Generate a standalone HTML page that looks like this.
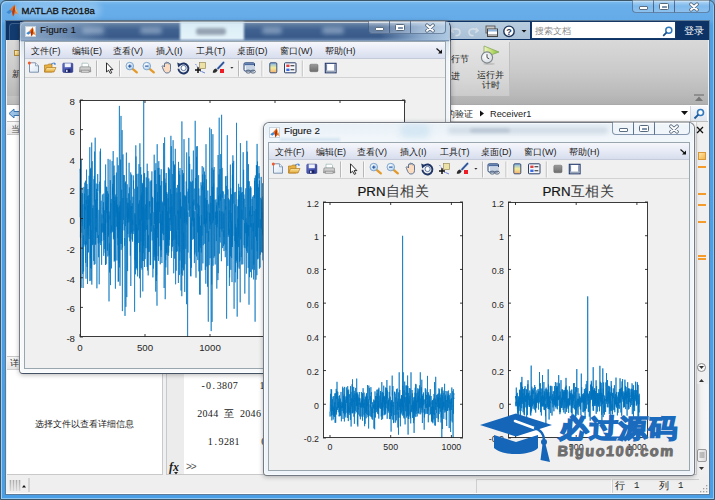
<!DOCTYPE html>
<html><head><meta charset="utf-8">
<style>
*{box-sizing:border-box}
html,body{margin:0;padding:0;width:715px;height:500px;overflow:hidden;background:#6aa6d8;font-family:"Liberation Sans",sans-serif;color:#1b1b1b}
.a{position:absolute}
#mainframe{left:0;top:0;width:715px;height:500px;border:1px solid #3a5668;border-radius:6px 6px 0 0;
 box-shadow:inset 1px 1px 0 #9ccdf4,inset -1px -1px 0 #8ec8f2;
 background:linear-gradient(180deg,#80bcee 0px,#6aafea 4px,#64abe9 19px,#4ea0e6 24px,#4a9ee6 100%)}
.t9{font-size:9px;white-space:nowrap;line-height:10px}
.cj{font-size:9px;white-space:nowrap;line-height:10px;font-weight:500}
.mono{font-family:"Liberation Mono",monospace;font-size:9px;white-space:pre;line-height:10px;color:#222}
.capbtn{border:1px solid rgba(40,70,110,.55);border-top:none;background:linear-gradient(180deg,rgba(255,255,255,.45),rgba(255,255,255,.15) 50%,rgba(255,255,255,.25));}
.menu span{position:absolute;top:4px;font-size:9px;line-height:10px;white-space:nowrap;color:#222}
</style></head><body>
<div id="mainframe" class="a"></div>
<!-- title -->
<svg class="a" style="left:6px;top:4px" width="13" height="13" viewBox="0 0 11.5 11.5"><path d="M0.3 7.2 L3.8 4.6 L6 6.2 L2.6 8.8Z" fill="#3d8ad0"/><path d="M3.8 4.6 L7.6 0.4 L11 9.2 L8.6 8 L6.2 11 L5.4 6.8Z" fill="#e86a1e"/><path d="M5.4 6.8 L7.6 0.4 L8.2 5.6 L6.2 11Z" fill="#a8300c"/><path d="M7.6 0.4 L9.2 4.8 L11 9.2 L8.2 5.6Z" fill="#f8b03a"/></svg>
<div class="a" style="left:15px;top:2px;width:86px;height:16px;border-radius:8px;background:rgba(200,230,250,.35);filter:blur(3px)"></div><div class="a t9" style="left:21.5px;top:5.5px;font-size:9.5px;color:#111;-webkit-text-stroke:0.3px #111">MATLAB R2018a</div>
<!-- caption buttons main -->
<div class="a capbtn" style="left:632px;top:0px;width:22px;height:13px;border-radius:0 0 0 4px"></div><div class="a capbtn" style="left:653px;top:0px;width:22px;height:13px"></div><div class="a capbtn" style="left:674px;top:0px;width:36px;height:13px;border-radius:0 0 4px 0"></div><div class="a" style="left:639px;top:6px;width:9px;height:4px;background:#fff;border:1px solid #5d6f82;border-radius:1px"></div><div class="a" style="left:659px;top:3px;width:10px;height:7px;background:#fdfdfd;border:1px solid #56687c;border-radius:1.5px"></div><div class="a" style="left:661.5px;top:5.5px;width:5px;height:2px;background:#7d93ac;border-radius:0.5px"></div><svg class="a" style="left:687.5px;top:2px" width="12" height="10" viewBox="0 0 12 10"><path d="M3 2.2 L9 7.8 M9 2.2 L3 7.8" stroke="#56687c" stroke-width="3.6" stroke-linecap="round"/><path d="M3 2.2 L9 7.8 M9 2.2 L3 7.8" stroke="#fff" stroke-width="1.9" stroke-linecap="round"/></svg>
<!-- inner client of main -->
<div class="a" style="left:5px;top:20px;width:705px;height:475px;background:#eef0f2;border:1px solid #5d7a96"></div>
<!-- navy tab strip -->
<div class="a" style="left:6px;top:21px;width:703px;height:19px;background:#0d3366"></div>
<div class="a" style="left:9px;top:23px;width:40px;height:18px;border:1px solid #3d5f8a;border-bottom:none;border-radius:4px 4px 0 0;background:#123b70"></div>
<!-- quick access toolbar -->
<div class="a" style="left:446px;top:22px;width:84px;height:17px;background:linear-gradient(180deg,#b9cde0,#a9c0d6)"></div>
<svg class="a" style="left:450px;top:25px" width="80" height="13" viewBox="0 0 80 13">
 <path d="M3.2 3 L1 5.6 L3.8 7.6 M1.6 5.5 C4.5 3.2 10 3.2 10 7.2 C10 9.6 8 10.6 5.5 10.6" fill="none" stroke="#d2dde8" stroke-width="1.7"/>
 <path d="M25.8 3 L28 5.6 L25.2 7.6 M27.4 5.5 C24.5 3.2 19 3.2 19 7.2 C19 9.6 21 10.6 23.5 10.6" fill="none" stroke="#d2dde8" stroke-width="1.7"/>
 <rect x="36" y="1" width="9" height="7" fill="#c8c8c8" stroke="#555" stroke-width="0.9"/>
 <rect x="37.5" y="4" width="10" height="7.5" fill="#fff" stroke="#444" stroke-width="1"/>
 <rect x="38" y="4.5" width="9" height="2" fill="#8fb4dc"/>
 <rect x="38" y="9" width="9" height="2" fill="#b0b0b0"/>
 <circle cx="59" cy="6.3" r="5.2" fill="#fff" stroke="#1d3358" stroke-width="1.4"/>
 <text x="59" y="9.6" font-size="9" font-weight="bold" text-anchor="middle" fill="#1d3358" font-family="Liberation Sans">?</text>
 <path d="M71.5 5 L76.5 5 L74 7.6Z" fill="#111"/>
</svg>
<!-- search box -->
<div class="a" style="left:531px;top:21px;width:145px;height:18px;background:#fff;border:1px solid #163a68"></div>
<div class="a cj" style="left:535px;top:25.5px;color:#8a8a8a;font-weight:400">搜索文档</div>
<svg class="a" style="left:662px;top:26px" width="11" height="11" viewBox="0 0 11 11"><circle cx="6.8" cy="4.2" r="3" fill="none" stroke="#2f78bd" stroke-width="1.5"/><path d="M4.7 6.3 L1.2 9.8" stroke="#1d4f86" stroke-width="1.8"/></svg>
<div class="a cj" style="left:684px;top:26px;color:#fff;font-size:9.5px">登录</div>

<!-- ribbon -->
<div class="a" style="left:7px;top:40px;width:701px;height:64px;background:linear-gradient(180deg,#d9d9d9 0,#cbcbcb 30px,#b9b9b9 55px,#b0b0b0 64px)"></div>
<div class="a" style="left:440px;top:40px;width:70px;height:56px;background:linear-gradient(180deg,#e6e6e6,#d6d6d6 40px,#cbcbcb)"></div>
<div class="a" style="left:509px;top:42px;width:1px;height:54px;background:#c0c0c0"></div>
<div class="a" style="left:7px;top:96px;width:433px;height:8px;background:linear-gradient(180deg,#c4c4c4,#bababa)"></div>
<div class="a" style="left:14px;top:50px;width:6px;height:6px;background:linear-gradient(135deg,#fff6c8,#e8b850);border:1px solid #b08a3a"></div>
<div class="a cj" style="left:12px;top:69px;color:#222">新建</div>
<div class="a cj" style="left:441.5px;top:54px">运行节</div>
<div class="a cj" style="left:442px;top:71px">前进</div>
<svg class="a" style="left:480px;top:45px" width="22" height="21" viewBox="0 0 22 21">
 <defs><linearGradient id="gtri" x1="0" y1="0" x2="1" y2="0"><stop offset="0" stop-color="#f0f4c8"/><stop offset=".45" stop-color="#c8e07a"/><stop offset="1" stop-color="#7cbf3a"/></linearGradient>
 <radialGradient id="gclk" cx=".4" cy=".4" r=".7"><stop offset="0" stop-color="#ffffff"/><stop offset="1" stop-color="#cfd6dc"/></radialGradient></defs>
 <ellipse cx="9" cy="18.8" rx="6" ry="1.3" fill="rgba(0,0,0,.12)"/>
 <path d="M4 1 L19 7 L4 12.5Z" fill="url(#gtri)" stroke="#86a85a" stroke-width="0.8"/>
 <circle cx="7" cy="12.5" r="5.6" fill="url(#gclk)" stroke="#7d858c" stroke-width="1.1"/>
 <path d="M7 9.2 V12.6 L9.2 13.8" fill="none" stroke="#333" stroke-width="0.9"/>
</svg>
<div class="a cj" style="left:477px;top:70px">运行并</div>
<div class="a cj" style="left:482px;top:80px">计时</div>
<svg class="a" style="left:694px;top:94px" width="10" height="8" viewBox="0 0 10 8"><path d="M0 1 L10 1" stroke="#666" stroke-width="1"/><path d="M1 7 L5 2.5 L9 7Z" fill="#777"/></svg>

<!-- address bar -->
<div class="a" style="left:7px;top:104px;width:701px;height:18px;background:#fff;border-top:1px solid #aaa;border-bottom:1px solid #bdbdbd"></div>
<svg class="a" style="left:8px;top:108px" width="13" height="11" viewBox="0 0 13 11"><path d="M1 5.5 L6 1 L6 3.5 L12 3.5 L12 7.5 L6 7.5 L6 10Z" fill="#9cc2e6" stroke="#3d78b5" stroke-width="1"/></svg>
<div class="a cj" style="left:446px;top:108.5px">的验证</div>
<svg class="a" style="left:479px;top:110px" width="6" height="7" viewBox="0 0 6 7"><path d="M1 0.5 L5 3.5 L1 6.5Z" fill="#111"/></svg>
<div class="a t9" style="left:490px;top:108.5px;font-size:9.2px">Receiver1</div>
<svg class="a" style="left:681px;top:111px" width="8" height="5" viewBox="0 0 8 5"><path d="M0 0 L7 0 L3.5 4Z" fill="#111"/></svg>
<div class="a" style="left:690px;top:106px;width:17px;height:15px;background:linear-gradient(180deg,#f6f8fb,#dfe6ef);border-left:1px solid #d0d6de"></div>
<svg class="a" style="left:693px;top:108px" width="12" height="12" viewBox="0 0 12 12"><circle cx="7.5" cy="4.5" r="3" fill="#fff" stroke="#2f78bd" stroke-width="1.6"/><path d="M5.3 6.7 L1.5 10.5" stroke="#1d5a9a" stroke-width="1.9"/></svg>

<!-- left panel: current folder -->
<div class="a" style="left:7px;top:122px;width:156px;height:13px;background:linear-gradient(180deg,#f7f7f7,#e6e6e6);border-bottom:1px solid #c8c8c8"></div>
<div class="a cj" style="left:11px;top:124px;color:#555">当前文件夹</div>
<div class="a" style="left:7px;top:135px;width:156px;height:221px;background:#fff;border-right:1px solid #c9c9c9"></div>
<div class="a" style="left:7px;top:356px;width:156px;height:14px;background:linear-gradient(180deg,#f7f7f7,#e6e6e6);border-top:1px solid #c8c8c8;border-bottom:1px solid #d0d0d0"></div>
<div class="a cj" style="left:10px;top:358px;color:#333">详细信息</div>
<div class="a" style="left:7px;top:370px;width:156px;height:105px;background:#fff;border-right:1px solid #c9c9c9;border-bottom:1px solid #c9c9c9"></div>
<div class="a cj" style="left:35px;top:419px;color:#222">选择文件以查看详细信息</div>

<!-- command window -->
<div class="a" style="left:166px;top:122px;width:542px;height:353px;background:#fff;border-left:1px solid #c9c9c9;border-bottom:1px solid #c9c9c9"></div>
<div class="a" style="left:167px;top:135px;width:17px;height:339px;background:#ececec"></div>
<div class="a" style="left:200.5px;top:379.5px;height:11px;white-space:nowrap;font-family:'Liberation Serif',serif;font-size:10px;line-height:11px;color:#1a1a1a"><span style="display:inline-block;width:5.35px;text-align:center;">-</span><span style="display:inline-block;width:5.35px;text-align:center;">0</span><span style="display:inline-block;width:5.35px;text-align:center;">.</span><span style="display:inline-block;width:5.35px;text-align:center;">3</span><span style="display:inline-block;width:5.35px;text-align:center;">8</span><span style="display:inline-block;width:5.35px;text-align:center;">0</span><span style="display:inline-block;width:5.35px;text-align:center;">7</span><span style="display:inline-block;width:5.35px"></span><span style="display:inline-block;width:5.35px"></span><span style="display:inline-block;width:5.35px"></span><span style="display:inline-block;width:5.35px"></span><span style="display:inline-block;width:5.35px;text-align:center;">1</span></div>
<div class="a" style="left:197px;top:407.5px;height:11px;white-space:nowrap;font-family:'Liberation Serif',serif;font-size:10px;line-height:11px;color:#1a1a1a"><span style="display:inline-block;width:5.35px;text-align:center;">2</span><span style="display:inline-block;width:5.35px;text-align:center;">0</span><span style="display:inline-block;width:5.35px;text-align:center;">4</span><span style="display:inline-block;width:5.35px;text-align:center;">4</span><span style="display:inline-block;width:5.35px"></span><span style="display:inline-block;width:10.7px;text-align:center;font-family:'Liberation Sans';font-size:9.5px">至</span><span style="display:inline-block;width:5.35px"></span><span style="display:inline-block;width:5.35px;text-align:center;">2</span><span style="display:inline-block;width:5.35px;text-align:center;">0</span><span style="display:inline-block;width:5.35px;text-align:center;">4</span><span style="display:inline-block;width:5.35px;text-align:center;">6</span></div>
<div class="a" style="left:207.7px;top:435.5px;height:11px;white-space:nowrap;font-family:'Liberation Serif',serif;font-size:10px;line-height:11px;color:#1a1a1a"><span style="display:inline-block;width:5.35px;text-align:center;">1</span><span style="display:inline-block;width:5.35px;text-align:center;">.</span><span style="display:inline-block;width:5.35px;text-align:center;">9</span><span style="display:inline-block;width:5.35px;text-align:center;">2</span><span style="display:inline-block;width:5.35px;text-align:center;">8</span><span style="display:inline-block;width:5.35px;text-align:center;">1</span><span style="display:inline-block;width:5.35px"></span><span style="display:inline-block;width:5.35px"></span><span style="display:inline-block;width:5.35px"></span><span style="display:inline-block;width:5.35px"></span><span style="display:inline-block;width:5.35px;text-align:center;">0</span></div>
<div class="a" style="left:169px;top:461px;font-family:'Liberation Serif',serif;font-style:italic;font-weight:bold;font-size:12px;line-height:12px">fx</div>
<svg class="a" style="left:174px;top:472px" width="5" height="3" viewBox="0 0 5 3"><path d="M0 0 L4 0 L2 2.5Z" fill="#222"/></svg>
<div class="a" style="left:186px;top:462px;font-size:10px;line-height:10px;color:#555;letter-spacing:-1px">&gt;&gt;</div>
<!-- right strip of command window (scroll) -->
<div class="a" style="left:696px;top:122px;width:12px;height:353px;background:#f0f0f0;border-left:1px solid #d6d6d6"></div>
<svg class="a" style="left:696px;top:126px" width="8" height="8" viewBox="0 0 8 8"><path d="M1 1 L7 7 M7 1 L1 7" stroke="#111" stroke-width="1.3"/></svg>
<div class="a" style="left:698px;top:152px;width:8px;height:8px;background:linear-gradient(135deg,#ffe7a8,#f3b54c);border:1px solid #d89a3a"></div>
<div class="a" style="left:698px;top:166px;width:8px;height:2px;background:#f39c2c"></div>
<div class="a" style="left:698px;top:193px;width:8px;height:2px;background:#f39c2c"></div>
<div class="a" style="left:698px;top:204px;width:8px;height:2px;background:#f39c2c"></div>
<div class="a" style="left:698px;top:221px;width:8px;height:2px;background:#f39c2c"></div>
<div class="a" style="left:698px;top:255px;width:8px;height:2px;background:#f39c2c"></div>
<div class="a" style="left:698px;top:258px;width:8px;height:2px;background:#f39c2c"></div>
<div class="a" style="left:697px;top:363px;width:9px;height:9px;border:1px solid #888;border-radius:50%;background:#f8f8f8"></div>
<svg class="a" style="left:699px;top:366px" width="5" height="4" viewBox="0 0 5 4"><path d="M0 0 L5 0 L2.5 3Z" fill="#333"/></svg>
<svg class="a" style="left:699px;top:379px" width="5" height="4" viewBox="0 0 5 4"><path d="M0 3 L5 3 L2.5 0Z" fill="#333"/></svg>
<div class="a" style="left:697px;top:384px;width:11px;height:77px;background:linear-gradient(90deg,#dedede,#f2f2f2 40%,#f6f6f6)"></div>
<div class="a" style="left:697px;top:449px;width:10px;height:13px;border:1px solid #9a9a9a;border-radius:2px;background:linear-gradient(90deg,#f6f6f6,#dadada)"></div>
<svg class="a" style="left:699px;top:452px" width="6" height="7" viewBox="0 0 6 7"><path d="M0.5 1 H5.5 M0.5 3 H5.5 M0.5 5 H5.5" stroke="#777" stroke-width="0.8"/></svg>
<svg class="a" style="left:699px;top:467px" width="5" height="4" viewBox="0 0 5 4"><path d="M0 0 L5 0 L2.5 3Z" fill="#333"/></svg>

<!-- status bar -->
<div class="a" style="left:7px;top:475px;width:701px;height:18px;background:#efefef"></div><div class="a" style="left:6px;top:493px;width:703px;height:1px;background:#fdfdfd"></div>
<svg class="a" style="left:9px;top:479px" width="20" height="13" viewBox="0 0 20 13"><defs><linearGradient id="sbg" x1="0" y1="0" x2="0" y2="1"><stop offset="0" stop-color="#a8a8a8"/><stop offset="1" stop-color="#d8d8d8"/></linearGradient></defs><path d="M1.5 1 V12 M4.5 1 V12 M7.5 1 V12 M10.5 1 V12" stroke="url(#sbg)" stroke-width="1.6"/><path d="M13 8.5 L15 6 L17 8.5Z" fill="#111"/></svg>
<div class="a" style="left:28px;top:478px;width:2px;height:14px;background:#d4d4d4"></div>
<div class="a" style="left:476px;top:479px;width:136px;height:14px;border-left:1px solid #cfcfcf;border-top:1px solid #cfcfcf;border-right:1px solid #fafafa"></div><div class="a" style="left:612px;top:479px;width:87px;height:14px;border-left:1px solid #cfcfcf;border-top:1px solid #cfcfcf"></div>
<div class="a cj" style="left:615px;top:481px;font-size:9.5px">行</div>
<div class="a mono" style="left:634px;top:481px">1</div>
<div class="a cj" style="left:659px;top:481px;font-size:9.5px">列</div>
<div class="a mono" style="left:678px;top:481px">1</div>
<svg class="a" style="left:700px;top:485px" width="8" height="8" viewBox="0 0 8 8"><g fill="#a0a0a0"><rect x="6" y="0" width="1.3" height="1.3"/><rect x="3" y="3" width="1.3" height="1.3"/><rect x="6" y="3" width="1.3" height="1.3"/><rect x="0" y="6" width="1.3" height="1.3"/><rect x="3" y="6" width="1.3" height="1.3"/><rect x="6" y="6" width="1.3" height="1.3"/></g></svg>
<div class="a" style="left:19px;top:21px;width:432px;height:353px;border:1px solid rgba(30,35,45,.58);border-radius:6px 6px 4px 4px;background:linear-gradient(180deg,#7d96b4 0,#5a789e 3px,#3f6190 8px,#3a5b8a 15px,#5d7da6 18px,#dce6ef 20px,#f2f6f9 40px,#f7f9fb 100%);box-shadow:0 1px 5px rgba(0,0,0,.28)"></div><div class="a" style="left:20px;top:22px;width:430px;height:351px;border:1px solid rgba(255,255,255,.6);border-radius:5px 5px 3px 3px"></div><div class="a" style="left:20px;top:22px;width:90px;height:18px;background:linear-gradient(90deg,rgba(165,190,215,.75),rgba(150,178,208,.55) 50%,rgba(140,170,200,0));"></div><div class="a" style="left:180px;top:22px;width:64px;height:18px;background:linear-gradient(180deg,#d8ecf6,#e6f4fa);filter:blur(0.8px)"></div><div class="a" style="left:380px;top:22px;width:69px;height:18px;background:linear-gradient(90deg,rgba(150,180,210,0),rgba(160,190,220,.8) 60%,rgba(180,206,230,.95));"></div><div class="a" style="left:82px;top:27px;width:22px;height:7px;border-radius:4px;background:rgba(200,218,236,0.45);filter:blur(2px)"></div><div class="a" style="left:140px;top:27px;width:22px;height:7px;border-radius:4px;background:rgba(200,218,236,0.45);filter:blur(2px)"></div><div class="a" style="left:262px;top:27px;width:20px;height:7px;border-radius:4px;background:rgba(200,218,236,0.45);filter:blur(2px)"></div><div class="a" style="left:322px;top:27px;width:22px;height:7px;border-radius:4px;background:rgba(200,218,236,0.45);filter:blur(2px)"></div><div class="a" style="left:196px;top:28px;width:30px;height:7px;border-radius:3px;background:rgba(90,100,120,.55);filter:blur(1.5px)"></div><div class="a" style="left:25px;top:26px;width:11px;height:11px;background:#fafafa;border:1px solid #c9d3de"></div><svg class="a" style="left:26px;top:27px" width="10" height="10" viewBox="0 0 11.5 11.5"><path d="M0.3 7.2 L3.8 4.6 L6 6.2 L2.6 8.8Z" fill="#3d8ad0"/><path d="M3.8 4.6 L7.6 0.4 L11 9.2 L8.6 8 L6.2 11 L5.4 6.8Z" fill="#e86a1e"/><path d="M5.4 6.8 L7.6 0.4 L8.2 5.6 L6.2 11Z" fill="#a8300c"/><path d="M7.6 0.4 L9.2 4.8 L11 9.2 L8.2 5.6Z" fill="#f8b03a"/></svg><div class="a t9" style="left:40px;top:25px;font-size:9.8px;color:#111;-webkit-text-stroke:0.1px #111">Figure 1</div><div class="a capbtn" style="left:368px;top:21px;width:22px;height:13px;border-radius:0 0 0 4px"></div><div class="a capbtn" style="left:389px;top:21px;width:22px;height:13px"></div><div class="a capbtn" style="left:410px;top:21px;width:36px;height:13px;border-radius:0 0 4px 0"></div><div class="a" style="left:375px;top:27px;width:9px;height:4px;background:#fff;border:1px solid #5d6f82;border-radius:1px"></div><div class="a" style="left:395px;top:24px;width:10px;height:7px;background:#fdfdfd;border:1px solid #56687c;border-radius:1.5px"></div><div class="a" style="left:397.5px;top:26.5px;width:5px;height:2px;background:#7d93ac;border-radius:0.5px"></div><svg class="a" style="left:423.5px;top:23px" width="12" height="10" viewBox="0 0 12 10"><path d="M3 2.2 L9 7.8 M9 2.2 L3 7.8" stroke="#56687c" stroke-width="3.6" stroke-linecap="round"/><path d="M3 2.2 L9 7.8 M9 2.2 L3 7.8" stroke="#fff" stroke-width="1.9" stroke-linecap="round"/></svg><div class="a" style="left:24px;top:41px;width:422px;height:328px;background:#f0f0f0;border:1px solid #9aa6ae;overflow:hidden"><div class="a menu" style="left:0;top:0;width:422px;height:17px;background:linear-gradient(180deg,#f6f7fc 0,#e4e8f4 60%,#d8deee 100%);border-bottom:1px solid #c5cbd8"><span style="left:6px">文件(F)</span><span style="left:47px">编辑(E)</span><span style="left:88px">查看(V)</span><span style="left:131px">插入(I)</span><span style="left:171px">工具(T)</span><span style="left:212px">桌面(D)</span><span style="left:255px">窗口(W)</span><span style="left:300px">帮助(H)</span></div><svg class="a" style="left:411px;top:6px" width="7" height="6" viewBox="0 0 7 6"><path d="M0.5 0.5 L5 4.5" stroke="#111" stroke-width="1.1"/><path d="M6 1.5 V5.5 H2Z" fill="#111"/></svg><div class="a" style="left:0;top:17px;width:422px;height:19px;background:#f0f0f0;border-bottom:1px solid #d2d2d2"><svg class="a" style="left:0;top:0" width="422" height="18" viewBox="0 0 422 18"><defs><linearGradient id="gdoc" x1="0" y1="0" x2="1" y2="1"><stop offset="0" stop-color="#ffffff"/><stop offset="1" stop-color="#d8e6f4"/></linearGradient><linearGradient id="gfold" x1="0" y1="0" x2="0" y2="1"><stop offset="0" stop-color="#fde9a6"/><stop offset="1" stop-color="#e3a735"/></linearGradient><linearGradient id="gsave" x1="0" y1="0" x2="1" y2="1"><stop offset="0" stop-color="#6a7ad6"/><stop offset="1" stop-color="#2a3590"/></linearGradient><linearGradient id="gprn" x1="0" y1="0" x2="0" y2="1"><stop offset="0" stop-color="#e4e4e4"/><stop offset="1" stop-color="#9a9a9a"/></linearGradient><radialGradient id="glens" cx=".4" cy=".35" r=".7"><stop offset="0" stop-color="#ffffff"/><stop offset="1" stop-color="#a9cdee"/></radialGradient><linearGradient id="cbg" x1="0" y1="0" x2="0" y2="1"><stop offset="0" stop-color="#7fb4ea"/><stop offset=".5" stop-color="#f4ec9c"/><stop offset="1" stop-color="#f2b070"/></linearGradient><linearGradient id="ggrey" x1="0" y1="0" x2="0" y2="1"><stop offset="0" stop-color="#9a9a9a"/><stop offset="1" stop-color="#6e6e6e"/></linearGradient></defs><path d="M4.5 3.8 H10.5 L13.5 6.8 V13.2 H4.5Z" fill="url(#gdoc)" stroke="#7088a8" stroke-width="0.9"/><path d="M10.5 3.8 V6.8 H13.5" fill="#e6eef8" stroke="#7088a8" stroke-width="0.7"/><circle cx="4.3" cy="4" r="1.5" fill="#f05a2a"/><path d="M19.5 6 H22.5 L23.5 5 H27 V13 H19.5Z" fill="#e8b040" stroke="#b07a20" stroke-width="0.7"/><path d="M19.5 13 L21.5 8.5 H31 L29 13Z" fill="url(#gfold)" stroke="#b07a20" stroke-width="0.7"/><path d="M26 5.5 C27.5 3.8 29.5 3.8 30.5 5" fill="none" stroke="#3f7fd0" stroke-width="1"/><path d="M29.5 3.5 L31 5.3 L28.8 5.8Z" fill="#3f7fd0"/><rect x="37.8" y="4.2" width="10" height="9.2" rx="0.8" fill="url(#gsave)" stroke="#25307a" stroke-width="0.6"/><rect x="39.8" y="4.4" width="6" height="3.8" fill="#f0f3fa"/><rect x="40.3" y="10.2" width="5" height="3.2" fill="#1c2460"/><rect x="41" y="10.8" width="1.6" height="2.2" fill="#d0d8ee"/><path d="M57 4.2 H62.5 L63.5 5.2 V8 H57Z" fill="#fff" stroke="#8aa" stroke-width="0.6"/><path d="M55 8 H65.3 L65.8 12.8 H54.5Z" fill="url(#gprn)" stroke="#777" stroke-width="0.6"/><rect x="56.5" y="11.2" width="7.5" height="2.2" fill="#cfcfcf" stroke="#888" stroke-width="0.5"/><rect x="71" y="1.5" width="1" height="16" fill="#b8b8b8"/><rect x="72" y="1.5" width="1" height="16" fill="#fafafa"/><path d="M81.5 3.8 V13 L83.6 11.2 L85.3 14.4 L86.8 13.7 L85.1 10.6 H87.9Z" fill="#fff" stroke="#1a1a1a" stroke-width="0.9" stroke-linejoin="round"/><rect x="94" y="1.5" width="1" height="16" fill="#b8b8b8"/><rect x="95" y="1.5" width="1" height="16" fill="#fafafa"/><path d="M107.6 9.8 L111.8 13.4" stroke="#e39a2a" stroke-width="2.3" stroke-linecap="round"/><circle cx="104.8" cy="7.1" r="3.8" fill="url(#glens)" stroke="#7aa2c8" stroke-width="0.9"/><path d="M103.1 7.1 H106.5" stroke="#1e4e9a" stroke-width="1.1"/><path d="M104.8 5.4 V8.8" stroke="#1e4e9a" stroke-width="1.1"/><path d="M124.6 9.8 L128.8 13.4" stroke="#e39a2a" stroke-width="2.3" stroke-linecap="round"/><circle cx="121.8" cy="7.1" r="3.8" fill="url(#glens)" stroke="#7aa2c8" stroke-width="0.9"/><path d="M120.1 7.1 H123.5" stroke="#1e4e9a" stroke-width="1.1"/><path d="M136 8.5 C135 7 136.3 6 137.3 7.2 L138 8 V4.6 C138 3.6 139.5 3.6 139.5 4.6 V3.8 C139.5 2.8 141 2.8 141 3.8 V4.2 C141 3.3 142.5 3.3 142.5 4.2 V5.2 C142.5 4.4 144 4.4 144 5.3 V10.5 C144 13 142.5 14 140.5 14 C138.5 14 137.6 12.8 136 8.5Z" fill="#fbdcc0" stroke="#3c5a88" stroke-width="0.8" transform="translate(1.5 0)"/><path d="M155 5.8 A5 5 0 1 1 153.4 9.8" fill="none" stroke="#1f3566" stroke-width="1.9"/><path d="M152.2 3.6 L156.6 5.6 L153.2 8.4Z" fill="#1f3566"/><circle cx="158.6" cy="9" r="2.6" fill="#fff" stroke="#3a5a90" stroke-width="0.8"/><rect x="174.6" y="3.5" width="6" height="6" fill="#ece2a8" stroke="#9a8a5a" stroke-width="0.7"/><path d="M170.5 5 L176 13" stroke="#4a6ad0" stroke-width="0.8" stroke-dasharray="1.2 0.9"/><path d="M173 8.2 V14 M170 11.1 H176" stroke="#111" stroke-width="1.5"/><path d="M176.5 12.5 L180 14" stroke="#4a6ad0" stroke-width="0.8"/><path d="M198.5 3.6 L193 9.4" stroke="#9ab8e0" stroke-width="2.6" stroke-linecap="round"/><path d="M198.5 3.6 L193 9.4" stroke="#2a4a90" stroke-width="1.4" stroke-linecap="round"/><path d="M187.8 13.8 C187.6 11.6 189 10 191 9.6 L192.6 11.2 C192 13 190 14 187.8 13.8Z" fill="#2d2d2d"/><rect x="195" y="10" width="4" height="4" fill="#ee1c24"/><path d="M205.3 8 H208.5 L206.9 9.8Z" fill="#333"/><rect x="213" y="1.5" width="1" height="16" fill="#b8b8b8"/><rect x="214" y="1.5" width="1" height="16" fill="#fafafa"/><rect x="219" y="3.8" width="10.5" height="8.2" rx="1.2" fill="#f2f6fb" stroke="#27457a" stroke-width="1"/><rect x="219.5" y="4.3" width="9.5" height="2" fill="#4a6aa0"/><rect x="221" y="7" width="9" height="4" fill="#c8d4e4"/><ellipse cx="223.3" cy="12.6" rx="2.4" ry="1.5" fill="none" stroke="#5a6a80" stroke-width="1"/><ellipse cx="228" cy="12.6" rx="2.4" ry="1.5" fill="none" stroke="#5a6a80" stroke-width="1"/><rect x="236.5" y="1.5" width="1" height="16" fill="#b8b8b8"/><rect x="237.5" y="1.5" width="1" height="16" fill="#fafafa"/><rect x="244.8" y="3.8" width="7" height="10" rx="1" fill="url(#cbg)" stroke="#2a3f6a" stroke-width="0.9"/><rect x="259.5" y="3.8" width="11.5" height="10" rx="0.8" fill="#f4f6fa" stroke="#2a3f6a" stroke-width="1"/><rect x="261.3" y="5.6" width="3.2" height="2.4" fill="#e04040"/><rect x="261.3" y="9.6" width="3.2" height="2.4" fill="#3a6ae0"/><path d="M265.5 6.8 H269.3 M265.5 10.8 H269.3" stroke="#222" stroke-width="1.1"/><rect x="276.8" y="1.5" width="1" height="16" fill="#b8b8b8"/><rect x="277.8" y="1.5" width="1" height="16" fill="#fafafa"/><rect x="284.8" y="5.2" width="8.2" height="7.5" rx="1.2" fill="url(#ggrey)" stroke="#666" stroke-width="0.5"/><rect x="300.3" y="4.3" width="10.8" height="9.5" fill="#fff" stroke="#22386a" stroke-width="1.1"/><rect x="301" y="11.6" width="9.4" height="1.6" fill="#9aa6b8"/><path d="M301.6 5.2 V11.6" stroke="#3a5488" stroke-width="0.8"/><path d="M309.8 5.2 V11.6" stroke="#3a5488" stroke-width="0.8"/></svg></div><svg class="a" style="left:-25px;top:-42px" width="715" height="500" viewBox="0 0 715 500"><rect x="80" y="100" width="325" height="237" fill="#fff"/><polyline points="80.0,217.3 80.1,168.8 80.3,173.5 80.4,237.3 80.5,229.6 80.7,238.1 80.8,197.2 80.9,220.6 81.0,190.5 81.2,287.8 81.3,159.7 81.4,222.1 81.6,193.0 81.7,223.6 81.8,232.7 82.0,201.2 82.1,187.7 82.2,226.0 82.3,224.2 82.5,193.2 82.6,250.5 82.7,274.0 82.9,204.1 83.0,242.9 83.1,288.0 83.2,247.8 83.4,235.3 83.5,261.1 83.6,271.5 83.8,217.2 83.9,186.9 84.0,226.7 84.2,244.5 84.3,205.1 84.4,193.6 84.5,228.9 84.7,199.7 84.8,182.6 84.9,225.6 85.1,246.5 85.2,206.5 85.3,210.0 85.5,180.7 85.6,262.8 85.7,241.4 85.8,247.5 86.0,278.7 86.1,214.1 86.2,200.0 86.4,244.5 86.5,169.6 86.6,189.3 86.8,196.1 86.9,204.1 87.0,184.0 87.2,266.9 87.3,196.0 87.4,196.3 87.5,284.0 87.7,205.6 87.8,227.9 87.9,189.0 88.1,235.2 88.2,219.2 88.3,205.3 88.5,252.4 88.6,195.3 88.7,222.6 88.8,199.2 89.0,239.0 89.1,175.7 89.2,194.6 89.4,225.6 89.5,193.4 89.6,168.4 89.8,147.2 89.9,281.1 90.0,183.4 90.1,200.0 90.3,222.2 90.4,258.3 90.5,168.9 90.7,268.1 90.8,196.3 90.9,167.8 91.0,280.5 91.2,230.2 91.3,268.6 91.4,209.2 91.6,161.3 91.7,142.6 91.8,284.6 92.0,239.7 92.1,192.8 92.2,161.2 92.3,203.4 92.5,245.1 92.6,208.0 92.7,219.1 92.9,225.6 93.0,243.8 93.1,205.3 93.3,208.1 93.4,221.6 93.5,225.9 93.7,260.9 93.8,234.4 93.9,179.2 94.0,224.7 94.2,264.8 94.3,175.8 94.4,201.6 94.6,151.6 94.7,216.5 94.8,233.1 95.0,264.1 95.1,176.9 95.2,137.7 95.3,244.3 95.5,238.9 95.6,199.7 95.7,244.7 95.9,227.1 96.0,229.6 96.1,212.4 96.2,183.5 96.4,217.8 96.5,188.9 96.6,232.1 96.8,207.8 96.9,288.3 97.0,266.1 97.2,192.3 97.3,238.0 97.4,199.2 97.5,200.4 97.7,174.1 97.8,191.1 97.9,184.1 98.1,222.3 98.2,242.3 98.3,243.4 98.5,235.2 98.6,257.2 98.7,237.3 98.8,221.7 99.0,209.9 99.1,230.1 99.2,284.3 99.4,221.0 99.5,210.8 99.6,181.7 99.8,198.9 99.9,240.2 100.0,242.8 100.2,151.4 100.3,193.4 100.4,158.1 100.5,148.7 100.7,245.1 100.8,206.0 100.9,203.8 101.1,200.7 101.2,201.4 101.3,212.2 101.5,213.1 101.6,264.8 101.7,223.5 101.8,241.1 102.0,214.7 102.1,232.4 102.2,200.2 102.4,194.5 102.5,209.5 102.6,209.4 102.8,215.8 102.9,231.3 103.0,223.2 103.1,232.5 103.3,207.6 103.4,218.1 103.5,202.2 103.7,255.8 103.8,193.6 103.9,239.9 104.0,239.1 104.2,224.1 104.3,234.4 104.4,210.3 104.6,234.8 104.7,249.1 104.8,242.8 105.0,180.5 105.1,217.2 105.2,252.8 105.3,218.3 105.5,265.0 105.6,164.5 105.7,264.9 105.9,203.8 106.0,201.6 106.1,263.9 106.3,209.0 106.4,186.7 106.5,203.4 106.7,210.0 106.8,187.3 106.9,213.2 107.0,207.3 107.2,222.8 107.3,197.1 107.4,250.7 107.6,191.2 107.7,236.0 107.8,256.5 108.0,205.7 108.1,158.9 108.2,184.5 108.3,236.8 108.5,193.7 108.6,234.7 108.7,222.9 108.9,215.3 109.0,301.4 109.1,211.6 109.2,255.3 109.4,243.4 109.5,271.1 109.6,272.5 109.8,252.0 109.9,189.2 110.0,159.6 110.2,219.4 110.3,180.2 110.4,227.7 110.5,285.1 110.7,213.3 110.8,203.1 110.9,233.2 111.1,208.2 111.2,199.0 111.3,247.8 111.5,268.4 111.6,226.0 111.7,225.6 111.8,230.3 112.0,185.6 112.1,161.1 112.2,232.3 112.4,195.3 112.5,187.3 112.6,194.9 112.8,183.8 112.9,231.4 113.0,193.9 113.2,151.1 113.3,191.7 113.4,239.3 113.5,198.1 113.7,175.9 113.8,206.0 113.9,237.7 114.1,165.6 114.2,261.6 114.3,201.0 114.5,219.1 114.6,260.5 114.7,175.2 114.8,206.1 115.0,260.5 115.1,196.7 115.2,234.3 115.4,288.7 115.5,244.1 115.6,208.6 115.8,194.5 115.9,212.2 116.0,216.8 116.1,200.4 116.3,226.7 116.4,172.6 116.5,212.7 116.7,206.9 116.8,197.1 116.9,260.5 117.1,246.8 117.2,157.4 117.3,205.1 117.4,229.8 117.6,204.8 117.7,237.9 117.8,207.3 118.0,245.2 118.1,207.4 118.2,281.7 118.3,165.3 118.5,238.9 118.6,281.3 118.7,227.4 118.9,233.1 119.0,212.5 119.1,263.1 119.3,203.1 119.4,105.9 119.5,267.4 119.7,205.7 119.8,230.2 119.9,211.3 120.0,285.8 120.2,260.9 120.3,201.7 120.4,219.9 120.6,159.6 120.7,243.7 120.8,212.3 121.0,115.9 121.1,245.3 121.2,249.9 121.3,219.7 121.5,220.0 121.6,189.7 121.7,214.1 121.9,244.0 122.0,211.4 122.1,130.1 122.2,176.0 122.4,311.1 122.5,223.2 122.6,247.5 122.8,197.9 122.9,224.2 123.0,154.4 123.2,187.6 123.3,188.9 123.4,212.3 123.6,219.8 123.7,207.1 123.8,175.0 123.9,200.5 124.1,230.4 124.2,175.2 124.3,211.9 124.5,221.2 124.6,245.7 124.7,238.1 124.8,240.6 125.0,315.9 125.1,182.9 125.2,198.6 125.4,226.1 125.5,181.5 125.6,203.0 125.8,205.3 125.9,306.8 126.0,226.8 126.2,199.5 126.3,160.9 126.4,152.6 126.5,167.4 126.7,260.1 126.8,297.1 126.9,198.1 127.1,217.5 127.2,184.3 127.3,223.0 127.5,210.8 127.6,271.1 127.7,202.9 127.8,233.9 128.0,206.5 128.1,202.8 128.2,222.5 128.4,207.8 128.5,219.0 128.6,193.4 128.8,202.0 128.9,236.3 129.0,237.4 129.1,162.8 129.3,221.7 129.4,187.4 129.5,206.3 129.7,235.8 129.8,241.3 129.9,214.9 130.1,210.8 130.2,200.3 130.3,255.7 130.4,235.8 130.6,221.2 130.7,172.4 130.8,286.0 131.0,206.0 131.1,233.8 131.2,206.3 131.3,232.3 131.5,208.3 131.6,174.6 131.7,208.6 131.9,206.3 132.0,208.0 132.1,239.6 132.3,203.2 132.4,224.4 132.5,241.6 132.7,219.6 132.8,225.0 132.9,196.7 133.0,219.7 133.2,234.0 133.3,175.4 133.4,189.0 133.6,180.4 133.7,200.1 133.8,221.9 133.9,231.4 134.1,227.2 134.2,188.8 134.3,215.0 134.5,265.7 134.6,311.8 134.7,264.3 134.9,213.1 135.0,258.0 135.1,260.2 135.2,214.6 135.4,221.1 135.5,274.3 135.6,193.3 135.8,145.3 135.9,268.8 136.0,156.5 136.2,242.0 136.3,235.4 136.4,224.6 136.6,268.0 136.7,174.0 136.8,201.6 136.9,244.2 137.1,228.0 137.2,270.2 137.3,230.3 137.5,186.8 137.6,276.4 137.7,233.2 137.8,213.6 138.0,183.5 138.1,173.7 138.2,233.6 138.4,242.9 138.5,203.7 138.6,230.3 138.8,228.6 138.9,183.6 139.0,164.1 139.2,210.0 139.3,224.6 139.4,200.3 139.5,278.3 139.7,219.1 139.8,251.9 139.9,143.3 140.1,195.9 140.2,214.1 140.3,224.6 140.4,297.6 140.6,196.1 140.7,167.1 140.8,241.5 141.0,196.8 141.1,195.5 141.2,268.0 141.4,188.4 141.5,174.7 141.6,211.1 141.8,220.6 141.9,192.5 142.0,269.7 142.1,215.4 142.3,182.9 142.4,260.9 142.5,184.4 142.7,233.0 142.8,291.4 142.9,222.2 143.1,253.1 143.2,207.0 143.3,261.0 143.4,180.1 143.6,245.8 143.7,100.0 143.8,240.8 144.0,230.7 144.1,173.2 144.2,210.3 144.4,233.7 144.5,267.0 144.6,173.3 144.7,189.8 144.9,231.3 145.0,208.9 145.1,259.2 145.3,258.7 145.4,251.3 145.5,204.5 145.7,206.7 145.8,248.1 145.9,189.2 146.0,187.3 146.2,211.6 146.3,177.4 146.4,229.8 146.6,222.9 146.7,200.0 146.8,219.8 146.9,187.7 147.1,266.9 147.2,163.7 147.3,248.3 147.5,224.8 147.6,270.5 147.7,196.0 147.9,171.0 148.0,178.8 148.1,187.8 148.2,275.4 148.4,246.9 148.5,235.2 148.6,252.1 148.8,178.4 148.9,212.0 149.0,219.4 149.2,201.4 149.3,251.8 149.4,250.2 149.6,249.1 149.7,201.3 149.8,206.7 149.9,198.6 150.1,181.4 150.2,265.2 150.3,237.8 150.5,213.4 150.6,264.9 150.7,236.9 150.9,183.5 151.0,180.3 151.1,181.1 151.2,217.0 151.4,225.9 151.5,180.6 151.6,231.6 151.8,206.5 151.9,171.4 152.0,231.6 152.2,240.4 152.3,218.8 152.4,196.8 152.5,201.0 152.7,212.8 152.8,198.1 152.9,277.4 153.1,250.3 153.2,212.4 153.3,253.1 153.4,268.6 153.6,263.7 153.7,252.9 153.8,225.2 154.0,256.9 154.1,209.7 154.2,154.7 154.4,224.0 154.5,170.7 154.6,207.7 154.8,260.3 154.9,228.0 155.0,254.9 155.1,190.1 155.3,260.9 155.4,170.1 155.5,197.5 155.7,291.6 155.8,190.4 155.9,163.2 156.1,246.4 156.2,184.0 156.3,281.0 156.4,209.8 156.6,275.2 156.7,202.2 156.8,278.3 157.0,305.7 157.1,205.5 157.2,144.2 157.4,237.7 157.5,192.1 157.6,215.0 157.7,228.6 157.9,199.5 158.0,168.1 158.1,256.1 158.3,201.5 158.4,208.2 158.5,260.9 158.7,170.8 158.8,161.2 158.9,246.4 159.0,167.9 159.2,216.9 159.3,223.2 159.4,175.1 159.6,211.9 159.7,209.2 159.8,174.7 159.9,181.3 160.1,192.6 160.2,259.2 160.3,264.3 160.5,185.5 160.6,245.7 160.7,214.1 160.9,250.4 161.0,224.0 161.1,256.9 161.2,169.2 161.4,249.5 161.5,222.2 161.6,224.3 161.8,181.0 161.9,263.0 162.0,219.6 162.2,225.1 162.3,201.6 162.4,203.3 162.6,233.5 162.7,210.7 162.8,230.7 162.9,203.1 163.1,221.9 163.2,240.2 163.3,219.4 163.5,206.4 163.6,143.0 163.7,234.9 163.9,208.3 164.0,169.6 164.1,288.0 164.2,276.7 164.4,258.2 164.5,222.3 164.6,137.4 164.8,205.5 164.9,178.6 165.0,225.8 165.2,299.2 165.3,294.0 165.4,185.4 165.5,212.5 165.7,260.2 165.8,182.8 165.9,267.4 166.1,182.7 166.2,173.0 166.3,242.4 166.4,252.9 166.6,192.5 166.7,252.1 166.8,192.2 167.0,254.8 167.1,194.1 167.2,215.7 167.4,231.5 167.5,245.3 167.6,211.4 167.8,274.8 167.9,226.7 168.0,230.3 168.1,198.3 168.3,255.8 168.4,167.4 168.5,227.8 168.7,252.6 168.8,176.8 168.9,168.2 169.1,224.2 169.2,245.7 169.3,218.0 169.4,239.9 169.6,228.2 169.7,169.4 169.8,206.1 170.0,213.8 170.1,207.3 170.2,220.4 170.4,190.8 170.5,189.2 170.6,230.9 170.7,214.9 170.9,135.8 171.0,203.9 171.1,225.0 171.3,146.2 171.4,218.2 171.5,257.9 171.7,194.1 171.8,251.3 171.9,236.8 172.0,206.4 172.2,223.2 172.3,247.1 172.4,239.3 172.6,241.0 172.7,174.1 172.8,246.0 172.9,240.4 173.1,140.2 173.2,239.8 173.3,161.1 173.5,167.7 173.6,224.4 173.7,273.3 173.9,201.0 174.0,192.6 174.1,181.3 174.2,215.7 174.4,172.4 174.5,165.5 174.6,258.6 174.8,164.4 174.9,211.9 175.0,239.7 175.2,230.4 175.3,148.8 175.4,182.1 175.6,284.3 175.7,215.4 175.8,223.6 175.9,224.9 176.1,237.0 176.2,270.7 176.3,187.8 176.5,251.9 176.6,231.6 176.7,239.7 176.9,244.1 177.0,192.5 177.1,205.1 177.2,242.0 177.4,251.4 177.5,234.8 177.6,184.9 177.8,214.1 177.9,210.4 178.0,229.9 178.2,227.5 178.3,210.9 178.4,283.0 178.5,161.9 178.7,246.3 178.8,238.6 178.9,170.9 179.1,210.6 179.2,217.0 179.3,239.5 179.4,275.1 179.6,211.8 179.7,174.7 179.8,251.7 180.0,168.0 180.1,260.5 180.2,246.0 180.4,199.4 180.5,218.5 180.6,192.2 180.8,246.9 180.9,258.1 181.0,290.5 181.1,265.1 181.3,260.3 181.4,274.0 181.5,206.5 181.7,244.4 181.8,296.2 181.9,121.4 182.1,251.1 182.2,267.6 182.3,170.1 182.4,173.1 182.6,263.3 182.7,275.6 182.8,257.1 183.0,175.1 183.1,230.4 183.2,249.3 183.4,219.6 183.5,173.2 183.6,270.4 183.7,232.7 183.9,269.4 184.0,139.2 184.1,152.7 184.3,184.4 184.4,223.2 184.5,195.3 184.7,291.9 184.8,208.9 184.9,264.3 185.0,263.4 185.2,242.2 185.3,230.2 185.4,199.6 185.6,195.6 185.7,210.0 185.8,248.8 185.9,197.0 186.1,222.3 186.2,181.4 186.3,247.1 186.5,304.2 186.6,233.2 186.7,152.4 186.9,204.2 187.0,224.4 187.1,191.6 187.2,203.2 187.4,204.5 187.5,234.1 187.6,337.0 187.8,212.4 187.9,238.0 188.0,252.6 188.2,214.3 188.3,188.8 188.4,198.6 188.6,203.2 188.7,202.9 188.8,137.9 188.9,210.4 189.1,185.7 189.2,156.5 189.3,216.8 189.5,210.0 189.6,184.9 189.7,163.9 189.9,208.3 190.0,206.6 190.1,215.5 190.2,258.3 190.4,181.5 190.5,226.9 190.6,275.8 190.8,223.3 190.9,276.4 191.0,252.2 191.2,217.8 191.3,249.3 191.4,182.3 191.5,267.7 191.7,209.5 191.8,199.6 191.9,169.4 192.1,187.5 192.2,210.5 192.3,215.6 192.4,220.2 192.6,180.8 192.7,239.7 192.8,201.3 193.0,221.2 193.1,210.5 193.2,226.5 193.4,150.6 193.5,238.8 193.6,210.3 193.8,209.6 193.9,199.5 194.0,204.4 194.1,205.3 194.3,188.6 194.4,263.1 194.5,217.9 194.7,254.5 194.8,211.3 194.9,252.6 195.1,245.9 195.2,120.8 195.3,178.0 195.4,201.6 195.6,209.7 195.7,178.1 195.8,245.0 196.0,277.7 196.1,230.2 196.2,226.1 196.4,182.8 196.5,156.8 196.6,256.4 196.7,146.5 196.9,172.6 197.0,193.6 197.1,207.3 197.3,146.1 197.4,215.7 197.5,232.4 197.7,213.8 197.8,260.1 197.9,203.4 198.0,221.5 198.2,207.6 198.3,206.6 198.4,252.2 198.6,175.2 198.7,251.4 198.8,188.5 198.9,271.4 199.1,205.4 199.2,246.0 199.3,216.5 199.5,240.6 199.6,294.4 199.7,257.3 199.9,215.5 200.0,195.7 200.1,270.7 200.2,294.7 200.4,249.6 200.5,225.6 200.6,241.1 200.8,247.7 200.9,186.6 201.0,182.3 201.2,190.6 201.3,252.6 201.4,215.1 201.6,225.1 201.7,270.6 201.8,185.4 201.9,214.7 202.1,235.7 202.2,166.1 202.3,190.1 202.5,186.8 202.6,174.5 202.7,192.0 202.9,263.4 203.0,231.9 203.1,182.2 203.2,245.2 203.4,216.7 203.5,204.0 203.6,167.5 203.8,172.7 203.9,186.8 204.0,224.5 204.2,186.5 204.3,199.9 204.4,223.6 204.5,171.6 204.7,201.2 204.8,243.8 204.9,174.9 205.1,226.7 205.2,197.9 205.3,270.0 205.4,218.7 205.6,250.4 205.7,251.4 205.8,283.7 206.0,144.2 206.1,223.3 206.2,209.8 206.4,179.4 206.5,222.4 206.6,200.0 206.8,266.5 206.9,211.1 207.0,233.1 207.1,200.0 207.3,211.6 207.4,269.1 207.5,286.7 207.7,256.0 207.8,190.5 207.9,202.1 208.1,202.9 208.2,295.4 208.3,321.7 208.4,242.4 208.6,231.2 208.7,241.8 208.8,204.3 209.0,225.0 209.1,265.2 209.2,253.2 209.3,212.6 209.5,215.4 209.6,221.3 209.7,127.6 209.9,228.9 210.0,213.5 210.1,258.2 210.3,232.7 210.4,197.5 210.5,195.9 210.7,224.7 210.8,202.8 210.9,216.3 211.0,292.1 211.2,331.1 211.3,129.1 211.4,186.5 211.6,220.7 211.7,284.4 211.8,266.5 212.0,167.8 212.1,321.9 212.2,230.4 212.3,186.8 212.5,213.3 212.6,191.4 212.7,223.2 212.9,134.2 213.0,254.4 213.1,265.7 213.2,209.1 213.4,169.8 213.5,220.4 213.6,183.3 213.8,236.2 213.9,257.8 214.0,172.4 214.2,167.1 214.3,168.5 214.4,232.7 214.6,255.9 214.7,256.2 214.8,225.7 214.9,199.8 215.1,202.2 215.2,264.5 215.3,212.2 215.5,217.9 215.6,215.6 215.7,219.3 215.8,225.0 216.0,199.3 216.1,214.4 216.2,211.2 216.4,241.1 216.5,205.5 216.6,222.5 216.8,288.6 216.9,202.4 217.0,227.3 217.2,187.4 217.3,224.0 217.4,221.7 217.5,211.3 217.7,218.9 217.8,233.8 217.9,280.1 218.1,155.0 218.2,273.1 218.3,230.3 218.5,195.8 218.6,205.3 218.7,198.8 218.8,191.8 219.0,174.6 219.1,208.2 219.2,117.7 219.4,253.6 219.5,210.7 219.6,230.9 219.8,237.2 219.9,208.7 220.0,169.0 220.1,242.5 220.3,242.4 220.4,194.3 220.5,200.5 220.7,154.1 220.8,185.0 220.9,211.1 221.1,229.1 221.2,211.6 221.3,224.0 221.4,261.2 221.6,114.8 221.7,223.9 221.8,225.6 222.0,231.5 222.1,167.9 222.2,197.8 222.3,190.9 222.5,236.2 222.6,248.1 222.7,226.6 222.9,211.5 223.0,228.3 223.1,223.8 223.3,191.4 223.4,210.1 223.5,246.1 223.7,230.5 223.8,236.9 223.9,213.4 224.0,251.1 224.2,223.5 224.3,199.1 224.4,217.7 224.6,244.3 224.7,236.0 224.8,214.9 225.0,204.6 225.1,194.3 225.2,222.7 225.3,257.2 225.5,176.3 225.6,209.6 225.7,206.3 225.9,209.2 226.0,250.3 226.1,228.4 226.2,210.5 226.4,185.9 226.5,216.6 226.6,318.7 226.8,226.3 226.9,207.0 227.0,175.9 227.2,194.9 227.3,135.2 227.4,170.5 227.6,172.8 227.7,186.3 227.8,265.9 227.9,189.3 228.1,197.7 228.2,236.8 228.3,198.0 228.5,203.9 228.6,234.8 228.7,222.8 228.8,227.8 229.0,210.4 229.1,233.4 229.2,199.3 229.4,285.9 229.5,228.4 229.6,277.5 229.8,235.4 229.9,200.5 230.0,217.7 230.2,222.3 230.3,216.1 230.4,164.6 230.5,256.3 230.7,188.3 230.8,269.8 230.9,234.3 231.1,213.0 231.2,247.0 231.3,211.7 231.5,194.3 231.6,258.0 231.7,221.0 231.8,230.9 232.0,282.1 232.1,224.6 232.2,244.5 232.4,174.9 232.5,247.0 232.6,163.2 232.8,235.9 232.9,155.3 233.0,200.9 233.1,203.6 233.3,192.0 233.4,188.8 233.5,172.1 233.7,160.9 233.8,230.1 233.9,260.5 234.1,308.8 234.2,231.7 234.3,192.4 234.4,205.4 234.6,214.5 234.7,230.8 234.8,241.1 235.0,228.6 235.1,204.5 235.2,282.4 235.3,191.9 235.5,272.2 235.6,224.4 235.7,242.2 235.9,232.4 236.0,258.3 236.1,262.7 236.3,227.5 236.4,260.6 236.5,122.8 236.7,235.0 236.8,244.5 236.9,240.5 237.0,261.3 237.2,316.6 237.3,229.0 237.4,206.3 237.6,279.1 237.7,218.6 237.8,267.3 238.0,220.2 238.1,204.4 238.2,199.4 238.3,201.4 238.5,246.9 238.6,183.8 238.7,236.6 238.9,205.0 239.0,191.1 239.1,230.7 239.2,268.7 239.4,195.1 239.5,261.7 239.6,252.8 239.8,260.6 239.9,187.1 240.0,224.9 240.2,302.3 240.3,191.8 240.4,143.1 240.6,153.5 240.7,239.3 240.8,216.1 240.9,200.7 241.1,187.3 241.2,217.6 241.3,257.0 241.5,192.7 241.6,197.6 241.7,264.5 241.8,231.4 242.0,209.7 242.1,219.0 242.2,201.1 242.4,192.0 242.5,200.6 242.6,222.8 242.8,264.3 242.9,198.1 243.0,171.7 243.2,152.2 243.3,220.0 243.4,220.1 243.5,169.8 243.7,169.9 243.8,207.3 243.9,194.5 244.1,245.2 244.2,198.8 244.3,247.7 244.5,224.0 244.6,223.3 244.7,235.5 244.8,293.6 245.0,248.3 245.1,207.1 245.2,221.2 245.4,233.1 245.5,203.6 245.6,194.1 245.8,188.3 245.9,248.3 246.0,218.3 246.1,231.2 246.3,251.1 246.4,273.6 246.5,222.7 246.7,250.9 246.8,140.8 246.9,222.7 247.1,227.2 247.2,233.5 247.3,151.7 247.4,252.8 247.6,224.8 247.7,246.4 247.8,223.5 248.0,220.3 248.1,180.9 248.2,267.9 248.3,219.8 248.5,164.2 248.6,236.2 248.7,225.0 248.9,248.4 249.0,304.7 249.1,222.4 249.3,181.3 249.4,233.9 249.5,277.1 249.7,210.7 249.8,216.6 249.9,188.4 250.0,191.4 250.2,227.1 250.3,207.1 250.4,272.1 250.6,186.3 250.7,213.6 250.8,187.6 251.0,188.4 251.1,227.2 251.2,223.2 251.3,243.8 251.5,277.5 251.6,222.7 251.7,214.6 251.9,249.6 252.0,198.9 252.1,216.2 252.2,206.1 252.4,240.9 252.5,269.4 252.6,196.7 252.8,201.4 252.9,222.2 253.0,231.3 253.2,227.1 253.3,223.1 253.4,234.2 253.6,279.4 253.7,195.3 253.8,264.6 253.9,229.2 254.1,228.5 254.2,210.9 254.3,269.8 254.5,180.7 254.6,198.1 254.7,194.2 254.8,177.9 255.0,245.0 255.1,321.7 255.2,207.9 255.4,175.4 255.5,180.2 255.6,236.7 255.8,221.9 255.9,209.2 256.0,279.7 256.1,241.3 256.3,240.3 256.4,165.1 256.5,240.8 256.7,165.5 256.8,218.2 256.9,275.2 257.1,143.9 257.2,251.3 257.3,197.8 257.5,161.5 257.6,236.3 257.7,259.3 257.8,184.1 258.0,216.4 258.1,258.6 258.2,253.7 258.4,231.1 258.5,187.4 258.6,227.7 258.8,197.6 258.9,166.1 259.0,178.4 259.1,173.3 259.3,179.9 259.4,268.7 259.5,180.5 259.7,208.3 259.8,222.3 259.9,252.0 260.1,267.5 260.2,252.7 260.3,219.2 260.4,254.7 260.6,243.7 260.7,237.6 260.8,197.8 261.0,227.7 261.1,223.1 261.2,176.9 261.4,228.6 261.5,199.5 261.6,252.2 261.7,207.9 261.9,214.6 262.0,212.8 262.1,233.8 262.3,252.7 262.4,228.5 262.5,234.3 262.6,183.3 262.8,187.2 262.9,260.3 263.0,196.5 263.2,235.5 263.3,202.1 263.4,235.9 263.6,272.0 263.7,181.2 263.8,201.8 264.0,264.2 264.1,289.5 264.2,238.7 264.3,263.5 264.5,232.4 264.6,194.6 264.7,161.7 264.9,232.4 265.0,164.8 265.1,172.9 265.2,235.5 265.4,284.1 265.5,184.9 265.6,194.4 265.8,125.6 265.9,162.1 266.0,187.6 266.2,152.0 266.3,259.5 266.4,210.8 266.6,229.0 266.7,150.5 266.8,196.4 266.9,331.1 267.1,165.6 267.2,252.9 267.3,188.6 267.5,236.3 267.6,208.9 267.7,194.3 267.9,210.9 268.0,253.3 268.1,166.6 268.2,203.5 268.4,218.6" fill="none" stroke="#0072bd" stroke-width="0.65"/><rect x="80.5" y="100.5" width="324" height="236" fill="none" stroke="#262626" stroke-width="0.9"/><path d="M80 100.0 h3 M405 100.0 h-3" stroke="#262626" stroke-width="0.9"/><text x="75" y="105.0" text-anchor="end" font-size="9.7" fill="#262626" font-family="Liberation Sans">8</text><path d="M80 129.625 h3 M405 129.625 h-3" stroke="#262626" stroke-width="0.9"/><text x="75" y="134.625" text-anchor="end" font-size="9.7" fill="#262626" font-family="Liberation Sans">6</text><path d="M80 159.25 h3 M405 159.25 h-3" stroke="#262626" stroke-width="0.9"/><text x="75" y="164.25" text-anchor="end" font-size="9.7" fill="#262626" font-family="Liberation Sans">4</text><path d="M80 188.875 h3 M405 188.875 h-3" stroke="#262626" stroke-width="0.9"/><text x="75" y="193.875" text-anchor="end" font-size="9.7" fill="#262626" font-family="Liberation Sans">2</text><path d="M80 218.5 h3 M405 218.5 h-3" stroke="#262626" stroke-width="0.9"/><text x="75" y="223.5" text-anchor="end" font-size="9.7" fill="#262626" font-family="Liberation Sans">0</text><path d="M80 248.125 h3 M405 248.125 h-3" stroke="#262626" stroke-width="0.9"/><text x="75" y="253.125" text-anchor="end" font-size="9.7" fill="#262626" font-family="Liberation Sans">-2</text><path d="M80 277.75 h3 M405 277.75 h-3" stroke="#262626" stroke-width="0.9"/><text x="75" y="282.75" text-anchor="end" font-size="9.7" fill="#262626" font-family="Liberation Sans">-4</text><path d="M80 307.375 h3 M405 307.375 h-3" stroke="#262626" stroke-width="0.9"/><text x="75" y="312.375" text-anchor="end" font-size="9.7" fill="#262626" font-family="Liberation Sans">-6</text><path d="M80 337.0 h3 M405 337.0 h-3" stroke="#262626" stroke-width="0.9"/><text x="75" y="342.0" text-anchor="end" font-size="9.7" fill="#262626" font-family="Liberation Sans">-8</text><path d="M80 337 v-3 M80 100 v3" stroke="#262626" stroke-width="0.9"/><text x="80" y="351.4" text-anchor="middle" font-size="9.7" fill="#262626" font-family="Liberation Sans">0</text><path d="M145 337 v-3 M145 100 v3" stroke="#262626" stroke-width="0.9"/><text x="145" y="351.4" text-anchor="middle" font-size="9.7" fill="#262626" font-family="Liberation Sans">500</text><path d="M210 337 v-3 M210 100 v3" stroke="#262626" stroke-width="0.9"/><text x="210" y="351.4" text-anchor="middle" font-size="9.7" fill="#262626" font-family="Liberation Sans">1000</text><path d="M275 337 v-3 M275 100 v3" stroke="#262626" stroke-width="0.9"/><text x="275" y="351.4" text-anchor="middle" font-size="9.7" fill="#262626" font-family="Liberation Sans">1500</text><path d="M340 337 v-3 M340 100 v3" stroke="#262626" stroke-width="0.9"/><text x="340" y="351.4" text-anchor="middle" font-size="9.7" fill="#262626" font-family="Liberation Sans">2000</text><path d="M405 337 v-3 M405 100 v3" stroke="#262626" stroke-width="0.9"/><text x="405" y="351.4" text-anchor="middle" font-size="9.7" fill="#262626" font-family="Liberation Sans">2500</text></svg></div><div class="a" style="left:263px;top:122px;width:432px;height:354px;border:1px solid rgba(30,35,45,.58);border-radius:6px 6px 4px 4px;background:linear-gradient(180deg,#e9f1f7 0,#f2f7fb 20px,#eef4f9 100%);box-shadow:0 1px 5px rgba(0,0,0,.28)"></div><div class="a" style="left:264px;top:123px;width:430px;height:352px;border:1px solid rgba(255,255,255,.6);border-radius:5px 5px 3px 3px"></div><div class="a" style="left:448px;top:127px;width:160px;height:7px;border-radius:3px;background:rgba(110,135,165,.2);filter:blur(2px)"></div><div class="a" style="left:470px;top:128px;width:40px;height:5px;border-radius:3px;background:rgba(80,100,130,.18);filter:blur(1.5px)"></div><div class="a" style="left:400px;top:124px;width:30px;height:14px;border-radius:6px;background:rgba(170,210,235,.35);filter:blur(3px)"></div><div class="a" style="left:280px;top:138px;width:60px;height:3px;background:rgba(150,190,220,.3);filter:blur(1px)"></div><div class="a" style="left:269px;top:127px;width:11px;height:11px;background:#fafafa;border:1px solid #c9d3de"></div><svg class="a" style="left:270px;top:128px" width="10" height="10" viewBox="0 0 11.5 11.5"><path d="M0.3 7.2 L3.8 4.6 L6 6.2 L2.6 8.8Z" fill="#3d8ad0"/><path d="M3.8 4.6 L7.6 0.4 L11 9.2 L8.6 8 L6.2 11 L5.4 6.8Z" fill="#e86a1e"/><path d="M5.4 6.8 L7.6 0.4 L8.2 5.6 L6.2 11Z" fill="#a8300c"/><path d="M7.6 0.4 L9.2 4.8 L11 9.2 L8.2 5.6Z" fill="#f8b03a"/></svg><div class="a t9" style="left:284px;top:126px;font-size:9.8px;color:#111;-webkit-text-stroke:0.1px #111">Figure 2</div><div class="a capbtn" style="left:612px;top:122px;width:22px;height:13px;border-radius:0 0 0 4px"></div><div class="a capbtn" style="left:633px;top:122px;width:22px;height:13px"></div><div class="a capbtn" style="left:654px;top:122px;width:36px;height:13px;border-radius:0 0 4px 0"></div><div class="a" style="left:619px;top:128px;width:9px;height:4px;background:#fff;border:1px solid #5d6f82;border-radius:1px"></div><div class="a" style="left:639px;top:125px;width:10px;height:7px;background:#fdfdfd;border:1px solid #56687c;border-radius:1.5px"></div><div class="a" style="left:641.5px;top:127.5px;width:5px;height:2px;background:#7d93ac;border-radius:0.5px"></div><svg class="a" style="left:667.5px;top:124px" width="12" height="10" viewBox="0 0 12 10"><path d="M3 2.2 L9 7.8 M9 2.2 L3 7.8" stroke="#56687c" stroke-width="3.6" stroke-linecap="round"/><path d="M3 2.2 L9 7.8 M9 2.2 L3 7.8" stroke="#fff" stroke-width="1.9" stroke-linecap="round"/></svg><div class="a" style="left:268px;top:142px;width:422px;height:329px;background:#f0f0f0;border:1px solid #9aa6ae;overflow:hidden"><div class="a menu" style="left:0;top:0;width:422px;height:17px;background:linear-gradient(180deg,#f6f7fc 0,#e4e8f4 60%,#d8deee 100%);border-bottom:1px solid #c5cbd8"><span style="left:6px">文件(F)</span><span style="left:47px">编辑(E)</span><span style="left:88px">查看(V)</span><span style="left:131px">插入(I)</span><span style="left:171px">工具(T)</span><span style="left:212px">桌面(D)</span><span style="left:255px">窗口(W)</span><span style="left:300px">帮助(H)</span></div><svg class="a" style="left:411px;top:6px" width="7" height="6" viewBox="0 0 7 6"><path d="M0.5 0.5 L5 4.5" stroke="#111" stroke-width="1.1"/><path d="M6 1.5 V5.5 H2Z" fill="#111"/></svg><div class="a" style="left:0;top:17px;width:422px;height:19px;background:#f0f0f0;border-bottom:1px solid #d2d2d2"><svg class="a" style="left:0;top:0" width="422" height="18" viewBox="0 0 422 18"><defs><linearGradient id="gdoc" x1="0" y1="0" x2="1" y2="1"><stop offset="0" stop-color="#ffffff"/><stop offset="1" stop-color="#d8e6f4"/></linearGradient><linearGradient id="gfold" x1="0" y1="0" x2="0" y2="1"><stop offset="0" stop-color="#fde9a6"/><stop offset="1" stop-color="#e3a735"/></linearGradient><linearGradient id="gsave" x1="0" y1="0" x2="1" y2="1"><stop offset="0" stop-color="#6a7ad6"/><stop offset="1" stop-color="#2a3590"/></linearGradient><linearGradient id="gprn" x1="0" y1="0" x2="0" y2="1"><stop offset="0" stop-color="#e4e4e4"/><stop offset="1" stop-color="#9a9a9a"/></linearGradient><radialGradient id="glens" cx=".4" cy=".35" r=".7"><stop offset="0" stop-color="#ffffff"/><stop offset="1" stop-color="#a9cdee"/></radialGradient><linearGradient id="cbg" x1="0" y1="0" x2="0" y2="1"><stop offset="0" stop-color="#7fb4ea"/><stop offset=".5" stop-color="#f4ec9c"/><stop offset="1" stop-color="#f2b070"/></linearGradient><linearGradient id="ggrey" x1="0" y1="0" x2="0" y2="1"><stop offset="0" stop-color="#9a9a9a"/><stop offset="1" stop-color="#6e6e6e"/></linearGradient></defs><path d="M4.5 3.8 H10.5 L13.5 6.8 V13.2 H4.5Z" fill="url(#gdoc)" stroke="#7088a8" stroke-width="0.9"/><path d="M10.5 3.8 V6.8 H13.5" fill="#e6eef8" stroke="#7088a8" stroke-width="0.7"/><circle cx="4.3" cy="4" r="1.5" fill="#f05a2a"/><path d="M19.5 6 H22.5 L23.5 5 H27 V13 H19.5Z" fill="#e8b040" stroke="#b07a20" stroke-width="0.7"/><path d="M19.5 13 L21.5 8.5 H31 L29 13Z" fill="url(#gfold)" stroke="#b07a20" stroke-width="0.7"/><path d="M26 5.5 C27.5 3.8 29.5 3.8 30.5 5" fill="none" stroke="#3f7fd0" stroke-width="1"/><path d="M29.5 3.5 L31 5.3 L28.8 5.8Z" fill="#3f7fd0"/><rect x="37.8" y="4.2" width="10" height="9.2" rx="0.8" fill="url(#gsave)" stroke="#25307a" stroke-width="0.6"/><rect x="39.8" y="4.4" width="6" height="3.8" fill="#f0f3fa"/><rect x="40.3" y="10.2" width="5" height="3.2" fill="#1c2460"/><rect x="41" y="10.8" width="1.6" height="2.2" fill="#d0d8ee"/><path d="M57 4.2 H62.5 L63.5 5.2 V8 H57Z" fill="#fff" stroke="#8aa" stroke-width="0.6"/><path d="M55 8 H65.3 L65.8 12.8 H54.5Z" fill="url(#gprn)" stroke="#777" stroke-width="0.6"/><rect x="56.5" y="11.2" width="7.5" height="2.2" fill="#cfcfcf" stroke="#888" stroke-width="0.5"/><rect x="71" y="1.5" width="1" height="16" fill="#b8b8b8"/><rect x="72" y="1.5" width="1" height="16" fill="#fafafa"/><path d="M81.5 3.8 V13 L83.6 11.2 L85.3 14.4 L86.8 13.7 L85.1 10.6 H87.9Z" fill="#fff" stroke="#1a1a1a" stroke-width="0.9" stroke-linejoin="round"/><rect x="94" y="1.5" width="1" height="16" fill="#b8b8b8"/><rect x="95" y="1.5" width="1" height="16" fill="#fafafa"/><path d="M107.6 9.8 L111.8 13.4" stroke="#e39a2a" stroke-width="2.3" stroke-linecap="round"/><circle cx="104.8" cy="7.1" r="3.8" fill="url(#glens)" stroke="#7aa2c8" stroke-width="0.9"/><path d="M103.1 7.1 H106.5" stroke="#1e4e9a" stroke-width="1.1"/><path d="M104.8 5.4 V8.8" stroke="#1e4e9a" stroke-width="1.1"/><path d="M124.6 9.8 L128.8 13.4" stroke="#e39a2a" stroke-width="2.3" stroke-linecap="round"/><circle cx="121.8" cy="7.1" r="3.8" fill="url(#glens)" stroke="#7aa2c8" stroke-width="0.9"/><path d="M120.1 7.1 H123.5" stroke="#1e4e9a" stroke-width="1.1"/><path d="M136 8.5 C135 7 136.3 6 137.3 7.2 L138 8 V4.6 C138 3.6 139.5 3.6 139.5 4.6 V3.8 C139.5 2.8 141 2.8 141 3.8 V4.2 C141 3.3 142.5 3.3 142.5 4.2 V5.2 C142.5 4.4 144 4.4 144 5.3 V10.5 C144 13 142.5 14 140.5 14 C138.5 14 137.6 12.8 136 8.5Z" fill="#fbdcc0" stroke="#3c5a88" stroke-width="0.8" transform="translate(1.5 0)"/><path d="M155 5.8 A5 5 0 1 1 153.4 9.8" fill="none" stroke="#1f3566" stroke-width="1.9"/><path d="M152.2 3.6 L156.6 5.6 L153.2 8.4Z" fill="#1f3566"/><circle cx="158.6" cy="9" r="2.6" fill="#fff" stroke="#3a5a90" stroke-width="0.8"/><rect x="174.6" y="3.5" width="6" height="6" fill="#ece2a8" stroke="#9a8a5a" stroke-width="0.7"/><path d="M170.5 5 L176 13" stroke="#4a6ad0" stroke-width="0.8" stroke-dasharray="1.2 0.9"/><path d="M173 8.2 V14 M170 11.1 H176" stroke="#111" stroke-width="1.5"/><path d="M176.5 12.5 L180 14" stroke="#4a6ad0" stroke-width="0.8"/><path d="M198.5 3.6 L193 9.4" stroke="#9ab8e0" stroke-width="2.6" stroke-linecap="round"/><path d="M198.5 3.6 L193 9.4" stroke="#2a4a90" stroke-width="1.4" stroke-linecap="round"/><path d="M187.8 13.8 C187.6 11.6 189 10 191 9.6 L192.6 11.2 C192 13 190 14 187.8 13.8Z" fill="#2d2d2d"/><rect x="195" y="10" width="4" height="4" fill="#ee1c24"/><path d="M205.3 8 H208.5 L206.9 9.8Z" fill="#333"/><rect x="213" y="1.5" width="1" height="16" fill="#b8b8b8"/><rect x="214" y="1.5" width="1" height="16" fill="#fafafa"/><rect x="219" y="3.8" width="10.5" height="8.2" rx="1.2" fill="#f2f6fb" stroke="#27457a" stroke-width="1"/><rect x="219.5" y="4.3" width="9.5" height="2" fill="#4a6aa0"/><rect x="221" y="7" width="9" height="4" fill="#c8d4e4"/><ellipse cx="223.3" cy="12.6" rx="2.4" ry="1.5" fill="none" stroke="#5a6a80" stroke-width="1"/><ellipse cx="228" cy="12.6" rx="2.4" ry="1.5" fill="none" stroke="#5a6a80" stroke-width="1"/><rect x="236.5" y="1.5" width="1" height="16" fill="#b8b8b8"/><rect x="237.5" y="1.5" width="1" height="16" fill="#fafafa"/><rect x="244.8" y="3.8" width="7" height="10" rx="1" fill="url(#cbg)" stroke="#2a3f6a" stroke-width="0.9"/><rect x="259.5" y="3.8" width="11.5" height="10" rx="0.8" fill="#f4f6fa" stroke="#2a3f6a" stroke-width="1"/><rect x="261.3" y="5.6" width="3.2" height="2.4" fill="#e04040"/><rect x="261.3" y="9.6" width="3.2" height="2.4" fill="#3a6ae0"/><path d="M265.5 6.8 H269.3 M265.5 10.8 H269.3" stroke="#222" stroke-width="1.1"/><rect x="276.8" y="1.5" width="1" height="16" fill="#b8b8b8"/><rect x="277.8" y="1.5" width="1" height="16" fill="#fafafa"/><rect x="284.8" y="5.2" width="8.2" height="7.5" rx="1.2" fill="url(#ggrey)" stroke="#666" stroke-width="0.5"/><rect x="300.3" y="4.3" width="10.8" height="9.5" fill="#fff" stroke="#22386a" stroke-width="1.1"/><rect x="301" y="11.6" width="9.4" height="1.6" fill="#9aa6b8"/><path d="M301.6 5.2 V11.6" stroke="#3a5488" stroke-width="0.8"/><path d="M309.8 5.2 V11.6" stroke="#3a5488" stroke-width="0.8"/></svg></div><svg class="a" style="left:-269px;top:-143px" width="715" height="500" viewBox="0 0 715 500"><rect x="323" y="202" width="140" height="236" fill="#fff"/><polyline points="330.0,411.7 330.1,416.6 330.2,406.6 330.4,400.4 330.5,393.8 330.6,403.3 330.7,409.4 330.8,411.6 331.0,397.4 331.1,389.1 331.2,401.8 331.3,415.7 331.5,413.2 331.6,389.5 331.7,402.4 331.8,420.4 331.9,405.1 332.1,415.1 332.2,410.1 332.3,408.8 332.4,410.9 332.5,399.2 332.7,404.9 332.8,409.8 332.9,400.5 333.0,396.6 333.2,419.5 333.3,406.7 333.4,413.4 333.5,410.4 333.6,416.3 333.8,404.1 333.9,396.0 334.0,407.1 334.1,414.0 334.2,408.0 334.4,414.4 334.5,416.9 334.6,402.2 334.7,414.6 334.9,393.5 335.0,397.7 335.1,422.8 335.2,401.8 335.3,393.2 335.5,404.0 335.6,403.9 335.7,422.7 335.8,406.5 335.9,406.7 336.1,395.4 336.2,388.9 336.3,397.5 336.4,414.5 336.6,407.4 336.7,412.1 336.8,390.9 336.9,399.0 337.0,381.8 337.2,398.3 337.3,396.5 337.4,396.5 337.5,409.9 337.6,404.9 337.8,391.8 337.9,408.0 338.0,402.5 338.1,404.5 338.3,398.7 338.4,407.7 338.5,405.7 338.6,402.1 338.7,403.3 338.9,412.3 339.0,396.0 339.1,416.3 339.2,415.4 339.3,416.2 339.5,395.3 339.6,407.6 339.7,413.3 339.8,414.8 340.0,400.4 340.1,414.1 340.2,416.1 340.3,398.6 340.4,415.4 340.6,407.3 340.7,404.4 340.8,408.4 340.9,404.8 341.0,391.9 341.2,409.1 341.3,416.0 341.4,421.3 341.5,406.2 341.7,407.6 341.8,401.8 341.9,408.6 342.0,408.7 342.1,411.0 342.3,409.1 342.4,402.8 342.5,407.8 342.6,403.4 342.7,386.7 342.9,399.9 343.0,418.9 343.1,388.2 343.2,401.1 343.4,413.0 343.5,395.9 343.6,404.1 343.7,410.0 343.8,410.2 344.0,413.5 344.1,403.9 344.2,394.4 344.3,407.3 344.4,421.5 344.6,386.9 344.7,415.6 344.8,414.2 344.9,397.2 345.1,413.8 345.2,413.8 345.3,399.8 345.4,400.3 345.5,409.2 345.7,403.8 345.8,417.5 345.9,401.6 346.0,396.2 346.1,400.0 346.3,399.8 346.4,387.4 346.5,398.5 346.6,403.1 346.8,397.7 346.9,412.8 347.0,407.4 347.1,396.9 347.2,398.5 347.4,389.9 347.5,404.2 347.6,417.9 347.7,386.2 347.8,393.5 348.0,414.1 348.1,391.5 348.2,404.0 348.3,421.1 348.5,408.2 348.6,409.0 348.7,389.6 348.8,411.6 348.9,406.7 349.1,406.9 349.2,407.8 349.3,412.8 349.4,402.3 349.5,394.3 349.7,398.5 349.8,412.9 349.9,415.0 350.0,402.4 350.2,410.9 350.3,410.1 350.4,419.9 350.5,386.2 350.6,395.8 350.8,413.3 350.9,395.9 351.0,391.9 351.1,426.5 351.2,409.4 351.4,407.9 351.5,398.3 351.6,405.4 351.7,406.4 351.9,404.8 352.0,387.1 352.1,384.3 352.2,409.2 352.3,412.9 352.5,379.3 352.6,413.4 352.7,409.6 352.8,404.0 352.9,399.8 353.1,394.8 353.2,400.7 353.3,412.4 353.4,399.6 353.6,402.0 353.7,386.9 353.8,404.4 353.9,416.7 354.0,414.0 354.2,390.9 354.3,409.3 354.4,423.8 354.5,409.7 354.6,404.3 354.8,393.3 354.9,413.7 355.0,398.1 355.1,396.9 355.3,410.8 355.4,406.0 355.5,387.9 355.6,388.4 355.7,396.4 355.9,401.2 356.0,393.7 356.1,405.6 356.2,405.2 356.3,412.3 356.5,393.5 356.6,405.1 356.7,378.6 356.8,406.1 357.0,392.5 357.1,392.1 357.2,406.0 357.3,393.5 357.4,424.5 357.6,403.4 357.7,396.4 357.8,426.5 357.9,415.0 358.0,394.5 358.2,406.7 358.3,414.5 358.4,407.8 358.5,409.3 358.7,397.6 358.8,400.1 358.9,406.9 359.0,402.7 359.1,404.8 359.3,392.0 359.4,401.1 359.5,398.4 359.6,405.7 359.7,416.3 359.9,410.9 360.0,398.3 360.1,403.3 360.2,412.7 360.4,419.3 360.5,403.3 360.6,407.4 360.7,407.5 360.8,407.4 361.0,401.7 361.1,401.6 361.2,416.6 361.3,395.7 361.4,392.0 361.6,396.8 361.7,407.4 361.8,404.8 361.9,399.7 362.0,407.2 362.2,399.2 362.3,393.6 362.4,411.7 362.5,420.7 362.7,393.2 362.8,404.1 362.9,397.7 363.0,416.7 363.1,388.2 363.3,397.5 363.4,405.5 363.5,407.6 363.6,403.2 363.7,405.8 363.9,406.9 364.0,414.7 364.1,392.6 364.2,404.7 364.4,403.6 364.5,403.4 364.6,426.2 364.7,399.4 364.8,407.4 365.0,407.0 365.1,423.9 365.2,413.3 365.3,396.5 365.4,410.8 365.6,412.7 365.7,412.3 365.8,402.8 365.9,397.4 366.1,409.8 366.2,418.3 366.3,394.5 366.4,414.2 366.5,393.2 366.7,404.8 366.8,410.8 366.9,410.2 367.0,400.0 367.1,396.1 367.3,406.1 367.4,395.5 367.5,385.0 367.6,406.2 367.8,415.0 367.9,402.5 368.0,417.2 368.1,410.2 368.2,411.0 368.4,416.6 368.5,399.4 368.6,428.5 368.7,416.5 368.8,385.6 369.0,394.7 369.1,399.5 369.2,400.1 369.3,387.9 369.5,399.3 369.6,403.6 369.7,415.7 369.8,413.6 369.9,411.1 370.1,410.8 370.2,410.9 370.3,404.7 370.4,407.4 370.5,396.2 370.7,416.6 370.8,405.9 370.9,387.1 371.0,403.9 371.2,393.2 371.3,393.8 371.4,392.1 371.5,397.5 371.6,417.1 371.8,406.8 371.9,407.8 372.0,418.7 372.1,408.6 372.2,415.9 372.4,419.7 372.5,402.3 372.6,404.7 372.7,410.7 372.9,413.1 373.0,409.3 373.1,408.0 373.2,408.1 373.3,404.8 373.5,408.3 373.6,400.7 373.7,399.5 373.8,401.0 373.9,428.4 374.1,410.0 374.2,400.3 374.3,406.1 374.4,404.7 374.6,427.4 374.7,429.3 374.8,401.2 374.9,412.5 375.0,391.4 375.2,397.6 375.3,402.2 375.4,404.1 375.5,417.5 375.6,396.1 375.8,409.9 375.9,399.6 376.0,402.4 376.1,401.8 376.3,396.0 376.4,408.8 376.5,407.9 376.6,412.2 376.7,407.8 376.9,389.7 377.0,407.7 377.1,393.3 377.2,396.6 377.3,397.5 377.5,396.9 377.6,413.7 377.7,400.8 377.8,389.6 378.0,410.8 378.1,404.7 378.2,410.7 378.3,401.4 378.4,414.3 378.6,389.4 378.7,407.8 378.8,418.6 378.9,387.7 379.0,395.3 379.2,399.5 379.3,399.4 379.4,407.6 379.5,406.4 379.7,397.6 379.8,395.8 379.9,395.7 380.0,402.3 380.1,408.6 380.3,406.1 380.4,394.0 380.5,391.0 380.6,407.5 380.7,408.7 380.9,392.7 381.0,397.6 381.1,397.8 381.2,416.5 381.4,407.8 381.5,409.1 381.6,402.4 381.7,419.9 381.8,382.1 382.0,401.5 382.1,400.3 382.2,415.3 382.3,404.5 382.4,391.9 382.6,418.9 382.7,401.5 382.8,397.8 382.9,410.7 383.1,396.7 383.2,407.4 383.3,392.9 383.4,399.4 383.5,402.2 383.7,385.7 383.8,390.2 383.9,392.2 384.0,415.3 384.1,410.3 384.3,396.5 384.4,395.9 384.5,404.8 384.6,397.1 384.8,414.1 384.9,402.3 385.0,414.9 385.1,401.1 385.2,408.8 385.4,410.2 385.5,403.8 385.6,387.5 385.7,413.7 385.8,409.9 386.0,394.4 386.1,408.2 386.2,387.9 386.3,402.2 386.5,403.5 386.6,401.0 386.7,388.2 386.8,398.2 386.9,380.0 387.1,402.0 387.2,418.8 387.3,412.5 387.4,390.5 387.5,396.7 387.7,399.6 387.8,409.3 387.9,409.3 388.0,401.2 388.2,412.7 388.3,400.7 388.4,410.9 388.5,406.3 388.6,400.1 388.8,405.5 388.9,398.3 389.0,400.1 389.1,401.0 389.2,392.0 389.4,418.0 389.5,419.1 389.6,398.6 389.7,395.6 389.9,385.7 390.0,397.3 390.1,396.6 390.2,412.5 390.3,397.3 390.5,419.1 390.6,414.1 390.7,412.6 390.8,405.3 390.9,401.6 391.1,431.6 391.2,403.6 391.3,402.2 391.4,405.9 391.5,416.1 391.7,400.1 391.8,413.7 391.9,400.4 392.0,406.6 392.2,375.6 392.3,395.5 392.4,390.5 392.5,391.9 392.6,419.6 392.8,419.6 392.9,386.0 393.0,406.6 393.1,404.9 393.2,411.6 393.4,413.0 393.5,423.1 393.6,402.7 393.7,401.9 393.9,422.6 394.0,414.0 394.1,411.2 394.2,404.5 394.3,402.0 394.5,393.9 394.6,391.7 394.7,394.4 394.8,391.9 394.9,415.1 395.1,409.4 395.2,393.7 395.3,401.6 395.4,404.1 395.6,422.6 395.7,421.5 395.8,397.5 395.9,401.1 396.0,407.0 396.2,408.1 396.3,420.3 396.4,400.9 396.5,394.7 396.6,389.1 396.8,403.8 396.9,406.2 397.0,414.5 397.1,393.0 397.3,388.5 397.4,410.0 397.5,401.6 397.6,403.5 397.7,409.6 397.9,427.5 398.0,407.7 398.1,398.7 398.2,417.7 398.3,412.1 398.5,434.7 398.6,392.4 398.7,399.7 398.8,403.9 399.0,406.8 399.1,410.2 399.2,372.3 399.3,407.2 399.4,406.6 399.6,404.6 399.7,403.1 399.8,389.9 399.9,417.7 400.0,401.9 400.2,410.1 400.3,414.9 400.4,426.3 400.5,398.7 400.7,413.5 400.8,411.3 400.9,400.0 401.0,414.4 401.1,404.2 401.3,405.1 401.4,397.0 401.5,395.0 401.6,412.4 401.7,395.9 401.9,405.3 402.0,403.3 402.1,406.4 402.2,397.2 402.4,415.6 402.5,402.0 402.6,235.8 402.7,407.0 402.8,385.6 403.0,411.2 403.1,402.4 403.2,408.9 403.3,372.3 403.4,414.7 403.6,409.4 403.7,404.9 403.8,417.5 403.9,396.2 404.1,390.3 404.2,418.6 404.3,396.7 404.4,402.6 404.5,402.1 404.7,381.6 404.8,393.2 404.9,401.3 405.0,402.7 405.1,424.4 405.3,397.1 405.4,411.2 405.5,402.7 405.6,403.4 405.8,395.4 405.9,385.5 406.0,395.2 406.1,392.5 406.2,406.5 406.4,400.1 406.5,397.2 406.6,417.6 406.7,385.4 406.8,410.9 407.0,416.1 407.1,389.2 407.2,386.2 407.3,410.8 407.5,410.0 407.6,375.5 407.7,415.6 407.8,386.0 407.9,410.0 408.1,434.6 408.2,398.2 408.3,418.7 408.4,392.9 408.5,398.0 408.7,407.4 408.8,419.1 408.9,400.2 409.0,414.6 409.2,404.8 409.3,388.0 409.4,399.3 409.5,403.7 409.6,403.7 409.8,397.5 409.9,395.8 410.0,416.5 410.1,402.6 410.2,388.4 410.4,397.3 410.5,418.3 410.6,410.6 410.7,423.4 410.9,411.7 411.0,372.3 411.1,404.9 411.2,412.2 411.3,409.6 411.5,405.3 411.6,405.3 411.7,407.6 411.8,411.4 411.9,398.4 412.1,390.0 412.2,409.6 412.3,409.3 412.4,393.3 412.6,417.9 412.7,409.8 412.8,407.8 412.9,402.7 413.0,406.8 413.2,412.5 413.3,401.4 413.4,415.3 413.5,420.5 413.6,423.1 413.8,397.4 413.9,420.4 414.0,400.2 414.1,432.9 414.3,396.8 414.4,405.9 414.5,409.4 414.6,403.5 414.7,409.8 414.9,416.2 415.0,392.7 415.1,412.6 415.2,387.7 415.3,399.5 415.5,408.5 415.6,400.2 415.7,383.9 415.8,417.1 416.0,384.5 416.1,414.0 416.2,402.8 416.3,400.6 416.4,404.0 416.6,411.1 416.7,409.2 416.8,393.3 416.9,393.9 417.0,403.1 417.2,416.4 417.3,398.5 417.4,401.6 417.5,402.0 417.7,388.3 417.8,400.7 417.9,413.3 418.0,413.2 418.1,391.5 418.3,402.4 418.4,396.1 418.5,405.3 418.6,413.1 418.7,401.3 418.9,389.3 419.0,400.6 419.1,414.2 419.2,388.6 419.4,408.3 419.5,402.0 419.6,394.1 419.7,385.3 419.8,401.4 420.0,407.4 420.1,402.7 420.2,403.3 420.3,372.3 420.4,403.2 420.6,403.4 420.7,414.3 420.8,398.4 420.9,407.4 421.1,412.5 421.2,398.9 421.3,407.9 421.4,387.3 421.5,399.0 421.7,402.7 421.8,379.7 421.9,407.3 422.0,395.6 422.1,409.9 422.3,396.5 422.4,423.0 422.5,401.7 422.6,396.0 422.7,400.4 422.9,403.6 423.0,394.2 423.1,411.5 423.2,412.7 423.4,402.6 423.5,392.5 423.6,399.6 423.7,405.4 423.8,400.8 424.0,399.5 424.1,415.2 424.2,429.7 424.3,413.1 424.4,417.5 424.6,409.0 424.7,414.8 424.8,411.6 424.9,399.6 425.1,402.7 425.2,403.8 425.3,388.2 425.4,407.8 425.5,407.1 425.7,391.8 425.8,413.8 425.9,389.4 426.0,391.3 426.1,400.3 426.3,397.9 426.4,397.5 426.5,395.0 426.6,407.8 426.8,404.1 426.9,413.7 427.0,402.0 427.1,401.2 427.2,407.5 427.4,397.1 427.5,375.9 427.6,413.9 427.7,395.5 427.8,394.5 428.0,393.3 428.1,410.6 428.2,392.1 428.3,422.3 428.5,404.3 428.6,406.2 428.7,400.8 428.8,394.4 428.9,394.8 429.1,399.6 429.2,406.2 429.3,397.2 429.4,406.9 429.5,395.6 429.7,401.6 429.8,408.4 429.9,415.2 430.0,410.0 430.2,400.6 430.3,389.2 430.4,395.7 430.5,414.0 430.6,407.4 430.8,402.6 430.9,404.2 431.0,402.5 431.1,396.0 431.2,397.9 431.4,409.9 431.5,421.4 431.6,406.8 431.7,419.3 431.9,405.3 432.0,400.9 432.1,416.4 432.2,422.2 432.3,418.9 432.5,414.0 432.6,400.1 432.7,421.9 432.8,400.4 432.9,423.3 433.1,406.5 433.2,408.1 433.3,399.2 433.4,398.6 433.6,400.8 433.7,414.1 433.8,407.2 433.9,419.4 434.0,394.0 434.2,410.2 434.3,414.8 434.4,408.9 434.5,382.1 434.6,400.6 434.8,413.4 434.9,425.3 435.0,413.0 435.1,418.6 435.3,425.7 435.4,398.7 435.5,409.9 435.6,401.4 435.7,376.8 435.9,402.9 436.0,404.4 436.1,402.2 436.2,407.9 436.3,413.1 436.5,407.4 436.6,394.9 436.7,407.9 436.8,418.1 437.0,417.0 437.1,415.0 437.2,405.3 437.3,400.9 437.4,400.9 437.6,394.3 437.7,407.1 437.8,397.4 437.9,402.1 438.0,398.5 438.2,422.1 438.3,393.4 438.4,419.2 438.5,415.3 438.7,397.5 438.8,408.3 438.9,388.3 439.0,403.1 439.1,414.1 439.3,403.1 439.4,408.2 439.5,390.1 439.6,389.4 439.7,397.6 439.9,408.2 440.0,403.7 440.1,394.7 440.2,411.8 440.4,411.8 440.5,397.7 440.6,397.6 440.7,406.5 440.8,406.9 441.0,422.5 441.1,393.4 441.2,405.5 441.3,417.6 441.4,414.8 441.6,412.6 441.7,388.6 441.8,438.0 441.9,416.7 442.1,387.1 442.2,391.9 442.3,414.1 442.4,429.0 442.5,395.4 442.7,409.9 442.8,405.6 442.9,409.2 443.0,392.6 443.1,390.6 443.3,396.8 443.4,405.7 443.5,401.9 443.6,410.1 443.8,418.9 443.9,392.8 444.0,407.3 444.1,401.9 444.2,403.0 444.4,395.9 444.5,394.4 444.6,383.8 444.7,407.5 444.8,412.6 445.0,403.0 445.1,410.2 445.2,396.2 445.3,411.6 445.5,402.9 445.6,395.4 445.7,394.7 445.8,402.2 445.9,391.0 446.1,392.1 446.2,419.8 446.3,400.2 446.4,402.4 446.5,406.8 446.7,426.0 446.8,403.6 446.9,400.4 447.0,401.4 447.2,391.3 447.3,394.8 447.4,409.4 447.5,411.0 447.6,396.1 447.8,410.4 447.9,402.4 448.0,399.5 448.1,394.4 448.2,399.2 448.4,390.5 448.5,407.7 448.6,397.7 448.7,398.0 448.9,402.2 449.0,402.8 449.1,412.5 449.2,428.1 449.3,395.1 449.5,400.6 449.6,402.6 449.7,410.4 449.8,407.0 449.9,399.7 450.1,403.7 450.2,393.2 450.3,402.8 450.4,411.5 450.6,432.0 450.7,409.8 450.8,401.9 450.9,420.7 451.0,407.2 451.2,398.8 451.3,410.0 451.4,404.2 451.5,398.5 451.6,403.4 451.8,387.5 451.9,406.4 452.0,405.7 452.1,405.5 452.2,422.4 452.4,418.3 452.5,408.3 452.6,407.1 452.7,391.2 452.9,404.8 453.0,405.6 453.1,438.0 453.2,401.5 453.3,389.2 453.5,413.8 453.6,400.0 453.7,397.7 453.8,398.9 453.9,393.3 454.1,394.5" fill="none" stroke="#0072bd" stroke-width="0.7"/><rect x="323.5" y="202.5" width="139" height="235" fill="none" stroke="#262626" stroke-width="0.9"/><path d="M323 202.0 h3 M463 202.0 h-3" stroke="#262626" stroke-width="0.9"/><text x="319" y="206.5" text-anchor="end" font-size="8.8" fill="#262626" font-family="Liberation Sans">1.2</text><path d="M323 235.71 h3 M463 235.71 h-3" stroke="#262626" stroke-width="0.9"/><text x="319" y="240.21" text-anchor="end" font-size="8.8" fill="#262626" font-family="Liberation Sans">1</text><path d="M323 269.42 h3 M463 269.42 h-3" stroke="#262626" stroke-width="0.9"/><text x="319" y="273.92" text-anchor="end" font-size="8.8" fill="#262626" font-family="Liberation Sans">0.8</text><path d="M323 303.13 h3 M463 303.13 h-3" stroke="#262626" stroke-width="0.9"/><text x="319" y="307.63" text-anchor="end" font-size="8.8" fill="#262626" font-family="Liberation Sans">0.6</text><path d="M323 336.84000000000003 h3 M463 336.84000000000003 h-3" stroke="#262626" stroke-width="0.9"/><text x="319" y="341.34000000000003" text-anchor="end" font-size="8.8" fill="#262626" font-family="Liberation Sans">0.4</text><path d="M323 370.55 h3 M463 370.55 h-3" stroke="#262626" stroke-width="0.9"/><text x="319" y="375.05" text-anchor="end" font-size="8.8" fill="#262626" font-family="Liberation Sans">0.2</text><path d="M323 404.26 h3 M463 404.26 h-3" stroke="#262626" stroke-width="0.9"/><text x="319" y="408.76" text-anchor="end" font-size="8.8" fill="#262626" font-family="Liberation Sans">0</text><path d="M323 437.97 h3 M463 437.97 h-3" stroke="#262626" stroke-width="0.9"/><text x="319" y="442.47" text-anchor="end" font-size="8.8" fill="#262626" font-family="Liberation Sans">-0.2</text><path d="M330 438 v-3 M330 202 v3" stroke="#262626" stroke-width="0.9"/><text x="330" y="450.4" text-anchor="middle" font-size="8.8" fill="#262626" font-family="Liberation Sans">0</text><path d="M390.7 438 v-3 M390.7 202 v3" stroke="#262626" stroke-width="0.9"/><text x="390.7" y="450.4" text-anchor="middle" font-size="8.8" fill="#262626" font-family="Liberation Sans">500</text><path d="M451.4 438 v-3 M451.4 202 v3" stroke="#262626" stroke-width="0.9"/><text x="451.4" y="450.4" text-anchor="middle" font-size="8.8" fill="#262626" font-family="Liberation Sans">1000</text><rect x="508" y="202" width="140" height="236" fill="#fff"/><polyline points="515.5,398.4 515.6,396.0 515.7,400.6 515.9,405.6 516.0,402.1 516.1,406.4 516.2,397.9 516.3,387.6 516.5,402.4 516.6,403.4 516.7,394.4 516.8,395.5 517.0,397.5 517.1,405.9 517.2,398.6 517.3,392.8 517.4,409.3 517.6,402.1 517.7,413.8 517.8,408.8 517.9,413.3 518.0,400.3 518.2,408.7 518.3,396.2 518.4,397.1 518.5,399.9 518.7,418.8 518.8,402.8 518.9,398.8 519.0,397.5 519.1,410.8 519.3,402.3 519.4,406.3 519.5,404.9 519.6,389.8 519.7,404.9 519.9,398.7 520.0,391.2 520.1,389.8 520.2,399.3 520.4,397.5 520.5,417.8 520.6,408.3 520.7,382.4 520.8,387.4 521.0,410.9 521.1,391.4 521.2,397.4 521.3,403.6 521.4,382.2 521.6,392.2 521.7,408.1 521.8,397.8 521.9,376.9 522.1,399.9 522.2,392.9 522.3,398.9 522.4,393.0 522.5,386.8 522.7,403.9 522.8,396.8 522.9,402.1 523.0,397.4 523.1,412.3 523.3,403.1 523.4,400.0 523.5,391.1 523.6,389.1 523.8,409.1 523.9,404.8 524.0,393.2 524.1,414.5 524.2,402.1 524.4,415.3 524.5,388.2 524.6,392.8 524.7,401.0 524.8,401.4 525.0,390.9 525.1,386.1 525.2,401.9 525.3,400.9 525.5,395.5 525.6,399.4 525.7,405.2 525.8,407.4 525.9,398.5 526.1,402.0 526.2,389.0 526.3,393.1 526.4,398.6 526.5,393.0 526.7,427.9 526.8,389.9 526.9,398.4 527.0,393.7 527.2,408.8 527.3,395.6 527.4,412.1 527.5,414.9 527.6,400.9 527.8,384.3 527.9,397.1 528.0,380.2 528.1,405.1 528.2,393.6 528.4,396.7 528.5,394.4 528.6,399.8 528.7,400.1 528.9,392.7 529.0,394.2 529.1,406.8 529.2,399.0 529.3,398.1 529.5,406.9 529.6,396.3 529.7,405.3 529.8,390.5 529.9,396.8 530.1,397.7 530.2,403.2 530.3,399.4 530.4,414.6 530.6,407.6 530.7,395.5 530.8,415.6 530.9,402.7 531.0,412.5 531.2,365.6 531.3,405.2 531.4,392.1 531.5,397.3 531.6,410.8 531.8,388.3 531.9,386.7 532.0,398.9 532.1,400.6 532.3,399.7 532.4,406.3 532.5,389.5 532.6,402.8 532.7,398.8 532.9,404.8 533.0,403.5 533.1,408.7 533.2,388.2 533.3,393.9 533.5,390.6 533.6,398.3 533.7,404.0 533.8,401.0 534.0,402.9 534.1,398.3 534.2,401.4 534.3,406.7 534.4,409.6 534.6,394.4 534.7,385.0 534.8,403.8 534.9,406.9 535.0,395.7 535.2,387.0 535.3,410.2 535.4,410.8 535.5,403.5 535.7,412.6 535.8,392.5 535.9,406.8 536.0,397.8 536.1,404.5 536.3,394.7 536.4,402.8 536.5,399.6 536.6,407.4 536.7,408.2 536.9,390.3 537.0,402.5 537.1,396.0 537.2,398.7 537.4,402.0 537.5,402.5 537.6,393.3 537.7,400.8 537.8,399.6 538.0,398.2 538.1,388.9 538.2,392.9 538.3,395.3 538.4,403.0 538.6,409.6 538.7,390.7 538.8,403.8 538.9,399.5 539.1,394.0 539.2,392.1 539.3,391.7 539.4,402.3 539.5,372.0 539.7,386.1 539.8,383.6 539.9,391.4 540.0,394.4 540.1,391.3 540.3,383.2 540.4,384.4 540.5,407.7 540.6,412.1 540.8,391.8 540.9,406.6 541.0,388.3 541.1,391.6 541.2,411.7 541.4,415.5 541.5,396.3 541.6,398.0 541.7,400.4 541.8,398.1 542.0,405.4 542.1,388.9 542.2,399.7 542.3,406.3 542.5,375.0 542.6,394.3 542.7,398.9 542.8,395.1 542.9,406.4 543.1,403.7 543.2,406.5 543.3,405.6 543.4,396.8 543.5,404.7 543.7,395.5 543.8,395.7 543.9,382.0 544.0,409.7 544.2,391.2 544.3,399.1 544.4,398.5 544.5,410.1 544.6,402.1 544.8,392.4 544.9,399.1 545.0,397.7 545.1,400.8 545.2,389.1 545.4,398.6 545.5,416.2 545.6,404.0 545.7,414.3 545.9,424.7 546.0,402.7 546.1,387.6 546.2,398.0 546.3,407.9 546.5,406.0 546.6,389.3 546.7,397.1 546.8,398.0 546.9,398.8 547.1,398.1 547.2,391.9 547.3,393.9 547.4,396.2 547.5,406.8 547.7,394.3 547.8,403.9 547.9,389.6 548.0,408.7 548.2,369.3 548.3,398.5 548.4,409.1 548.5,384.5 548.6,386.6 548.8,402.2 548.9,392.2 549.0,395.3 549.1,419.5 549.2,396.4 549.4,409.5 549.5,397.7 549.6,407.1 549.7,400.6 549.9,399.8 550.0,399.5 550.1,395.7 550.2,398.4 550.3,386.0 550.5,402.9 550.6,401.6 550.7,413.1 550.8,385.7 550.9,390.6 551.1,391.0 551.2,393.0 551.3,397.5 551.4,396.7 551.6,400.4 551.7,400.0 551.8,398.0 551.9,386.2 552.0,415.6 552.2,398.9 552.3,403.1 552.4,403.5 552.5,400.8 552.6,394.3 552.8,397.9 552.9,401.2 553.0,407.4 553.1,398.9 553.3,391.3 553.4,401.6 553.5,400.2 553.6,400.2 553.7,397.5 553.9,411.3 554.0,400.3 554.1,405.3 554.2,391.2 554.3,404.6 554.5,393.7 554.6,386.1 554.7,400.9 554.8,403.3 555.0,396.9 555.1,398.4 555.2,406.4 555.3,394.7 555.4,382.1 555.6,400.5 555.7,400.0 555.8,406.9 555.9,395.8 556.0,408.5 556.2,407.4 556.3,388.0 556.4,405.7 556.5,389.7 556.7,386.1 556.8,396.3 556.9,393.9 557.0,382.6 557.1,400.0 557.3,388.4 557.4,409.3 557.5,398.1 557.6,386.4 557.7,390.6 557.9,406.0 558.0,405.3 558.1,402.5 558.2,396.0 558.4,400.1 558.5,396.7 558.6,396.0 558.7,375.1 558.8,398.7 559.0,396.7 559.1,399.1 559.2,394.3 559.3,383.3 559.4,393.6 559.6,397.9 559.7,412.0 559.8,395.3 559.9,414.2 560.1,409.8 560.2,391.5 560.3,392.7 560.4,399.6 560.5,412.2 560.7,401.4 560.8,403.9 560.9,393.2 561.0,380.1 561.1,396.6 561.3,404.7 561.4,407.9 561.5,398.9 561.6,399.8 561.8,407.7 561.9,397.5 562.0,407.7 562.1,389.4 562.2,405.4 562.4,389.6 562.5,402.2 562.6,395.8 562.7,399.5 562.8,401.5 563.0,401.1 563.1,408.9 563.2,410.1 563.3,392.0 563.5,399.9 563.6,396.6 563.7,390.3 563.8,412.4 563.9,404.7 564.1,397.0 564.2,395.2 564.3,401.5 564.4,390.1 564.5,396.7 564.7,408.2 564.8,405.9 564.9,391.9 565.0,394.6 565.2,413.8 565.3,387.5 565.4,393.6 565.5,387.5 565.6,401.5 565.8,400.8 565.9,407.5 566.0,377.9 566.1,399.8 566.2,385.6 566.4,403.6 566.5,401.0 566.6,411.9 566.7,401.5 566.9,390.4 567.0,408.5 567.1,389.7 567.2,395.7 567.3,406.5 567.5,402.5 567.6,402.1 567.7,398.8 567.8,402.7 567.9,405.1 568.1,400.9 568.2,406.7 568.3,408.8 568.4,398.8 568.6,412.9 568.7,410.8 568.8,398.4 568.9,403.7 569.0,406.3 569.2,391.5 569.3,402.6 569.4,386.3 569.5,404.7 569.6,395.3 569.8,400.2 569.9,404.5 570.0,393.6 570.1,399.7 570.3,393.5 570.4,398.8 570.5,395.0 570.6,399.2 570.7,398.0 570.9,390.6 571.0,405.7 571.1,398.7 571.2,412.3 571.3,393.1 571.5,407.2 571.6,413.0 571.7,398.9 571.8,389.5 572.0,410.7 572.1,420.7 572.2,404.4 572.3,407.5 572.4,395.3 572.6,404.9 572.7,404.2 572.8,393.7 572.9,404.5 573.0,394.9 573.2,406.3 573.3,408.2 573.4,394.3 573.5,383.3 573.7,401.0 573.8,396.4 573.9,398.7 574.0,395.6 574.1,398.0 574.3,383.0 574.4,406.8 574.5,405.3 574.6,406.6 574.7,409.2 574.9,392.4 575.0,391.8 575.1,406.2 575.2,409.6 575.4,401.3 575.5,387.1 575.6,421.2 575.7,410.4 575.8,407.1 576.0,415.7 576.1,407.1 576.2,400.7 576.3,410.6 576.4,406.3 576.6,387.2 576.7,391.8 576.8,369.1 576.9,405.4 577.0,413.7 577.2,401.6 577.3,398.7 577.4,399.1 577.5,399.2 577.7,407.5 577.8,398.9 577.9,398.7 578.0,388.0 578.1,415.1 578.3,399.5 578.4,404.6 578.5,398.9 578.6,403.3 578.7,404.4 578.9,398.9 579.0,406.8 579.1,393.5 579.2,399.2 579.4,396.4 579.5,399.9 579.6,404.3 579.7,406.1 579.8,400.3 580.0,402.8 580.1,396.5 580.2,398.4 580.3,409.4 580.4,397.9 580.6,409.3 580.7,403.4 580.8,400.8 580.9,415.2 581.1,397.7 581.2,397.2 581.3,373.6 581.4,401.8 581.5,401.4 581.7,387.3 581.8,400.6 581.9,402.9 582.0,397.7 582.1,401.1 582.3,396.5 582.4,397.2 582.5,399.5 582.6,402.0 582.8,393.9 582.9,411.9 583.0,394.7 583.1,396.4 583.2,396.1 583.4,395.3 583.5,403.7 583.6,400.5 583.7,393.2 583.8,412.4 584.0,396.7 584.1,410.7 584.2,394.0 584.3,388.9 584.5,390.2 584.6,396.5 584.7,411.0 584.8,390.8 584.9,399.6 585.1,418.9 585.2,395.3 585.3,410.5 585.4,408.9 585.5,403.5 585.7,388.1 585.8,401.4 585.9,396.2 586.0,384.3 586.2,385.5 586.3,399.2 586.4,400.4 586.5,408.6 586.6,404.0 586.8,395.0 586.9,380.9 587.0,397.5 587.1,390.4 587.2,404.6 587.4,398.9 587.5,392.5 587.6,393.7 587.7,296.4 587.9,395.2 588.0,400.9 588.1,395.5 588.2,406.5 588.3,411.7 588.5,393.7 588.6,398.8 588.7,395.9 588.8,412.1 588.9,401.4 589.1,403.3 589.2,405.4 589.3,416.6 589.4,409.3 589.6,391.1 589.7,395.3 589.8,403.3 589.9,398.5 590.0,392.3 590.2,420.7 590.3,399.4 590.4,394.0 590.5,392.9 590.6,384.6 590.8,389.2 590.9,400.2 591.0,396.0 591.1,392.0 591.3,380.8 591.4,398.7 591.5,391.1 591.6,382.6 591.7,399.7 591.9,391.1 592.0,396.8 592.1,387.5 592.2,398.6 592.3,386.5 592.5,406.2 592.6,399.9 592.7,400.0 592.8,392.0 593.0,389.9 593.1,410.6 593.2,367.2 593.3,395.7 593.4,403.7 593.6,410.7 593.7,390.0 593.8,394.4 593.9,394.4 594.0,404.0 594.2,390.1 594.3,400.3 594.4,389.5 594.5,405.8 594.7,388.1 594.8,396.7 594.9,404.1 595.0,392.9 595.1,396.3 595.3,405.9 595.4,397.8 595.5,401.2 595.6,391.0 595.7,403.5 595.9,402.0 596.0,388.6 596.1,380.3 596.2,413.8 596.4,397.9 596.5,396.6 596.6,386.0 596.7,399.4 596.8,406.3 597.0,397.5 597.1,394.7 597.2,405.1 597.3,411.7 597.4,410.0 597.6,393.0 597.7,404.5 597.8,399.5 597.9,396.7 598.1,393.4 598.2,401.1 598.3,394.4 598.4,405.6 598.5,401.3 598.7,406.7 598.8,389.2 598.9,398.6 599.0,404.4 599.1,401.3 599.3,400.2 599.4,392.7 599.5,411.3 599.6,406.8 599.8,401.5 599.9,365.8 600.0,390.7 600.1,399.3 600.2,392.6 600.4,381.8 600.5,400.3 600.6,401.4 600.7,388.6 600.8,406.3 601.0,393.0 601.1,402.5 601.2,382.8 601.3,384.6 601.5,393.8 601.6,392.9 601.7,414.8 601.8,393.2 601.9,427.5 602.1,394.9 602.2,397.7 602.3,401.2 602.4,397.9 602.5,395.4 602.7,404.4 602.8,368.4 602.9,403.3 603.0,400.7 603.2,417.1 603.3,388.6 603.4,396.4 603.5,389.4 603.6,382.4 603.8,398.2 603.9,413.0 604.0,405.6 604.1,408.2 604.2,402.5 604.4,397.8 604.5,414.6 604.6,395.6 604.7,396.1 604.9,396.0 605.0,399.3 605.1,400.9 605.2,399.0 605.3,402.8 605.5,403.4 605.6,412.0 605.7,398.6 605.8,387.4 605.9,382.4 606.1,387.7 606.2,392.7 606.3,403.9 606.4,386.7 606.5,373.1 606.7,399.0 606.8,400.8 606.9,396.8 607.0,401.9 607.2,399.1 607.3,407.2 607.4,401.4 607.5,380.0 607.6,399.0 607.8,400.3 607.9,394.1 608.0,392.7 608.1,407.4 608.2,400.1 608.4,391.0 608.5,396.2 608.6,397.4 608.7,385.8 608.9,403.9 609.0,397.7 609.1,402.6 609.2,386.3 609.3,414.2 609.5,403.8 609.6,402.7 609.7,393.0 609.8,393.5 609.9,387.1 610.1,411.1 610.2,392.3 610.3,400.8 610.4,403.8 610.6,394.0 610.7,405.8 610.8,415.2 610.9,401.4 611.0,410.5 611.2,381.0 611.3,395.4 611.4,395.9 611.5,385.6 611.6,388.5 611.8,410.8 611.9,404.5 612.0,405.8 612.1,408.3 612.3,394.9 612.4,403.6 612.5,414.4 612.6,392.8 612.7,399.3 612.9,395.5 613.0,397.5 613.1,393.3 613.2,398.1 613.3,388.4 613.5,395.0 613.6,395.2 613.7,395.1 613.8,410.2 614.0,399.7 614.1,400.5 614.2,396.7 614.3,409.4 614.4,385.2 614.6,397.6 614.7,400.1 614.8,412.2 614.9,400.7 615.0,399.1 615.2,404.2 615.3,397.7 615.4,403.6 615.5,393.9 615.7,404.3 615.8,394.8 615.9,390.5 616.0,377.6 616.1,406.6 616.3,402.2 616.4,405.2 616.5,392.1 616.6,407.7 616.7,402.3 616.9,398.6 617.0,395.5 617.1,406.1 617.2,402.2 617.4,415.4 617.5,410.1 617.6,401.7 617.7,397.2 617.8,399.9 618.0,412.8 618.1,402.2 618.2,391.9 618.3,393.9 618.4,399.0 618.6,405.6 618.7,393.3 618.8,403.1 618.9,407.9 619.1,404.9 619.2,409.0 619.3,396.6 619.4,389.0 619.5,402.3 619.7,390.8 619.8,403.3 619.9,399.7 620.0,378.3 620.1,378.5 620.3,402.5 620.4,399.1 620.5,395.8 620.6,388.6 620.8,402.4 620.9,412.5 621.0,400.7 621.1,398.3 621.2,397.5 621.4,387.7 621.5,395.8 621.6,391.8 621.7,415.7 621.8,391.4 622.0,381.4 622.1,392.1 622.2,396.3 622.3,397.2 622.5,383.9 622.6,379.1 622.7,399.3 622.8,394.7 622.9,392.4 623.1,401.9 623.2,395.9 623.3,400.6 623.4,397.4 623.5,399.5 623.7,407.6 623.8,398.6 623.9,391.3 624.0,406.2 624.2,400.4 624.3,393.0 624.4,407.1 624.5,396.9 624.6,407.0 624.8,389.2 624.9,379.7 625.0,382.0 625.1,400.2 625.2,392.4 625.4,397.4 625.5,397.6 625.6,385.9 625.7,409.1 625.9,389.9 626.0,398.8 626.1,387.0 626.2,396.9 626.3,403.8 626.5,396.2 626.6,392.4 626.7,398.1 626.8,394.5 626.9,402.6 627.1,415.7 627.2,391.1 627.3,392.7 627.4,397.2 627.6,397.8 627.7,382.2 627.8,402.1 627.9,404.1 628.0,399.9 628.2,388.8 628.3,409.6 628.4,388.8 628.5,403.6 628.6,407.3 628.8,388.2 628.9,399.2 629.0,408.9 629.1,401.3 629.3,390.9 629.4,388.8 629.5,401.9 629.6,395.1 629.7,392.6 629.9,397.2 630.0,395.5 630.1,398.7 630.2,402.7 630.3,402.4 630.5,406.8 630.6,398.2 630.7,403.0 630.8,401.8 631.0,389.4 631.1,396.7 631.2,391.2 631.3,388.7 631.4,393.6 631.6,399.1 631.7,405.1 631.8,391.9 631.9,401.0 632.0,383.4 632.2,384.6 632.3,414.2 632.4,406.2 632.5,393.0 632.7,392.0 632.8,389.1 632.9,399.0 633.0,394.7 633.1,393.1 633.3,399.0 633.4,385.2 633.5,416.7 633.6,393.3 633.7,406.8 633.9,390.6 634.0,400.3 634.1,405.6 634.2,395.4 634.4,405.8 634.5,405.8 634.6,411.1 634.7,398.6 634.8,391.8 635.0,390.1 635.1,399.5 635.2,389.9 635.3,398.3 635.4,399.2 635.6,381.7 635.7,389.8 635.8,401.2 635.9,400.4 636.1,399.7 636.2,397.7 636.3,405.7 636.4,390.1 636.5,403.9 636.7,394.7 636.8,405.1 636.9,395.5 637.0,395.2 637.1,401.8 637.3,382.1 637.4,395.4 637.5,384.0 637.6,392.5 637.7,403.8 637.9,401.5 638.0,418.3 638.1,384.9 638.2,398.0 638.4,400.7 638.5,413.0 638.6,400.2 638.7,416.3 638.8,395.4 639.0,404.3 639.1,404.2 639.2,393.7 639.3,396.2 639.4,410.0 639.6,412.5" fill="none" stroke="#0072bd" stroke-width="0.75"/><rect x="508.5" y="202.5" width="139" height="235" fill="none" stroke="#262626" stroke-width="0.9"/><path d="M508 202.0 h3 M648 202.0 h-3" stroke="#262626" stroke-width="0.9"/><text x="504" y="206.5" text-anchor="end" font-size="8.8" fill="#262626" font-family="Liberation Sans">1.2</text><path d="M508 235.71 h3 M648 235.71 h-3" stroke="#262626" stroke-width="0.9"/><text x="504" y="240.21" text-anchor="end" font-size="8.8" fill="#262626" font-family="Liberation Sans">1</text><path d="M508 269.42 h3 M648 269.42 h-3" stroke="#262626" stroke-width="0.9"/><text x="504" y="273.92" text-anchor="end" font-size="8.8" fill="#262626" font-family="Liberation Sans">0.8</text><path d="M508 303.13 h3 M648 303.13 h-3" stroke="#262626" stroke-width="0.9"/><text x="504" y="307.63" text-anchor="end" font-size="8.8" fill="#262626" font-family="Liberation Sans">0.6</text><path d="M508 336.84000000000003 h3 M648 336.84000000000003 h-3" stroke="#262626" stroke-width="0.9"/><text x="504" y="341.34000000000003" text-anchor="end" font-size="8.8" fill="#262626" font-family="Liberation Sans">0.4</text><path d="M508 370.55 h3 M648 370.55 h-3" stroke="#262626" stroke-width="0.9"/><text x="504" y="375.05" text-anchor="end" font-size="8.8" fill="#262626" font-family="Liberation Sans">0.2</text><path d="M508 404.26 h3 M648 404.26 h-3" stroke="#262626" stroke-width="0.9"/><text x="504" y="408.76" text-anchor="end" font-size="8.8" fill="#262626" font-family="Liberation Sans">0</text><path d="M508 437.97 h3 M648 437.97 h-3" stroke="#262626" stroke-width="0.9"/><text x="504" y="442.47" text-anchor="end" font-size="8.8" fill="#262626" font-family="Liberation Sans">-0.2</text><path d="M515.5 438 v-3 M515.5 202 v3" stroke="#262626" stroke-width="0.9"/><text x="515.5" y="450.4" text-anchor="middle" font-size="8.8" fill="#262626" font-family="Liberation Sans">0</text><path d="M576.2 438 v-3 M576.2 202 v3" stroke="#262626" stroke-width="0.9"/><text x="576.2" y="450.4" text-anchor="middle" font-size="8.8" fill="#262626" font-family="Liberation Sans">500</text><path d="M636.9 438 v-3 M636.9 202 v3" stroke="#262626" stroke-width="0.9"/><text x="636.9" y="450.4" text-anchor="middle" font-size="8.8" fill="#262626" font-family="Liberation Sans">1000</text></svg></div><div class="a" style="left:357.5px;top:184px;font-size:13.3px;line-height:16px;white-space:nowrap;color:#151515;-webkit-text-stroke:0.2px #151515">PRN<span style="-webkit-text-stroke:0;color:#3a3a3a;font-size:13.5px;letter-spacing:0.6px">自相关</span></div><div class="a" style="left:542.5px;top:184px;font-size:13.3px;line-height:16px;white-space:nowrap;color:#151515;-webkit-text-stroke:0.2px #151515">PRN<span style="-webkit-text-stroke:0;color:#3a3a3a;font-size:13.5px;letter-spacing:0.6px">互相关</span></div><svg class="a" style="left:478px;top:410px" width="80" height="56" viewBox="0 0 80 56">
 <path d="M2 15 L38 3.5 L74 15 L38 26.5Z" fill="#1565b8"/>
 <path d="M37 11 L56 18" stroke="#fff" stroke-width="2.6" stroke-linecap="round"/>
 <path d="M16 25 L38 32 L60 25 L60 38 C52 46 24 46 16 38Z" fill="#1565b8"/>
 <path d="M56 18 C64 20 66 26 66 30" fill="none" stroke="#1565b8" stroke-width="2.4"/>
 <circle cx="66" cy="32" r="3" fill="#1565b8"/>
 <path d="M64.5 34 L62.5 50 L72 52 L67.5 34Z" fill="#1565b8"/>
</svg>
<div class="a" style="left:559px;top:413px;font-size:25.5px;line-height:30px;font-weight:900;color:#1a6bbd;white-space:nowrap;transform:skewX(-4deg) scaleX(1.13);transform-origin:0 100%;-webkit-text-stroke:1.5px #1a6bbd">必过源码</div>
<div class="a" style="left:557px;top:443px;font-size:14.5px;line-height:16px;font-weight:bold;color:#6e6e6e;white-space:nowrap;letter-spacing:1.5px;transform:skewX(-4deg);transform-origin:0 100%;-webkit-text-stroke:1px #6e6e6e">Biguo100.com</div>
</body></html>
